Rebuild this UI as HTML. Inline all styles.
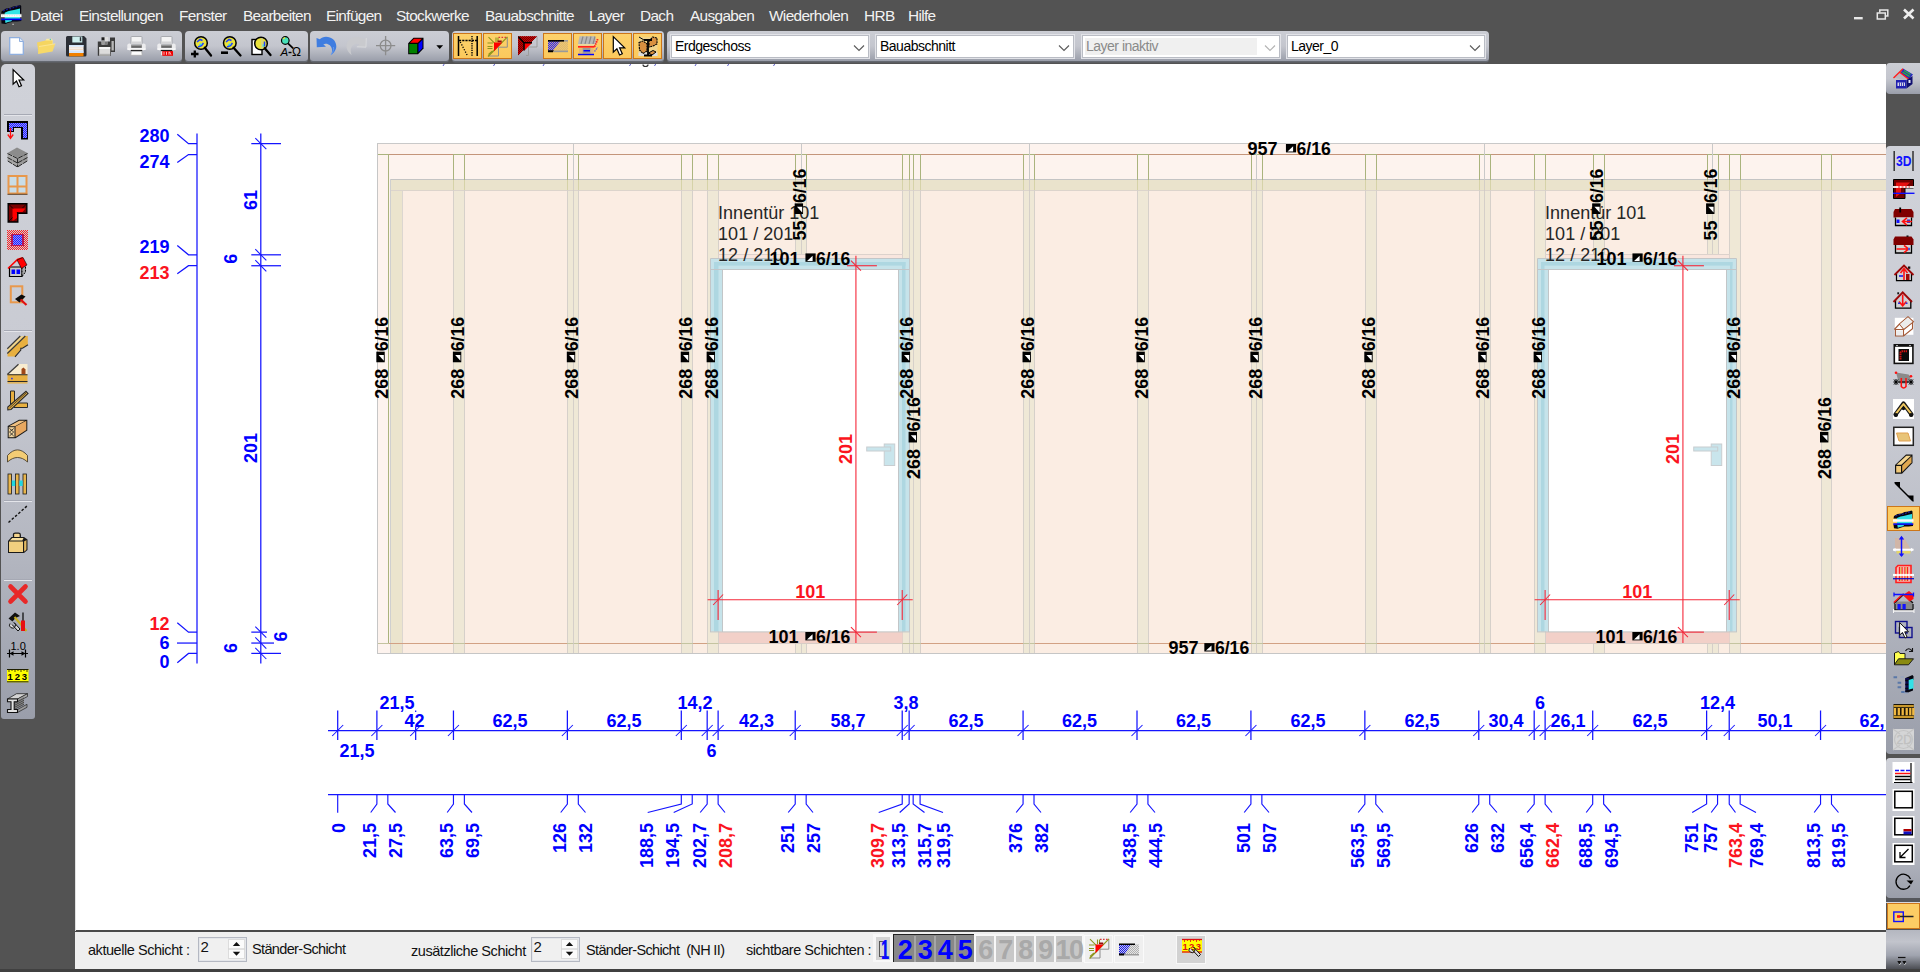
<!DOCTYPE html>
<html><head><meta charset="utf-8"><title>HRB</title>
<style>
html,body{margin:0;padding:0;}
body{width:1920px;height:972px;overflow:hidden;background:#535353;position:relative;font-family:"Liberation Sans",sans-serif;}
.abs{position:absolute;}
#draw{position:absolute;left:0;top:0;width:1920px;height:972px;}
#draw text{font-family:"Liberation Sans",sans-serif;}
#draw .b{font-weight:bold;font-size:18px;}
#draw .t{font-size:18px;fill:#262626;}
.menu span{position:absolute;top:6.5px;font-size:15.4px;color:#f2f2f2;white-space:nowrap;letter-spacing:-0.66px;}
.tb{position:absolute;top:31px;height:30.4px;border-radius:4px 4px 3px 3px;background:linear-gradient(#cbcdd4 0%,#c4c6ce 50%,#b4b7c0 70%,#9a9eaa 100%);box-shadow:0 1.4px 0 #646870;}
.ob{position:absolute;top:33px;height:23.9px;width:26.6px;background:linear-gradient(#fdd26c,#fbc95c);border:1.6px solid #cc7619;}
.cb{position:absolute;top:34.5px;height:23.8px;background:#fff;border:1px solid #b9bcc4;box-sizing:border-box;font-size:14px;line-height:21.5px;padding-left:3px;letter-spacing:-0.5px;color:#000;box-shadow:0 0 0 1px #e2e3e8;}
.cb svg{position:absolute;right:3.5px;top:8.5px;}
.sb{position:absolute;left:75px;top:930px;width:1811px;height:39px;background:#efefef;border-top:2px solid #4a4a4a;box-sizing:border-box;}
.sb>*{margin-top:1px;}
.sb span{position:absolute;font-size:14.5px;letter-spacing:-0.45px;color:#111;white-space:nowrap;}
.ic{position:absolute;}
</style></head><body>
<svg id="draw" viewBox="0 0 1920 972">
<defs><clipPath id="cp"><rect x="75" y="64" width="1811" height="867"/></clipPath></defs>
<rect x="75" y="64" width="1811" height="867" fill="#fff"/>
<g clip-path="url(#cp)" shape-rendering="auto">
<rect x="377.5" y="143.5" width="1513" height="510" fill="#fdf3ee" stroke="#c9c9c9"/>
<rect x="390" y="190" width="1500" height="463.5" fill="#fbede3"/>
<rect x="391" y="190" width="11" height="463.5" fill="#ebe4cd"/><line x1="402.5" y1="190" x2="402.5" y2="653" stroke="#dcd6d0"/>
<rect x="453.5" y="190" width="11" height="463.5" fill="#efe8d6"/>
<rect x="567.5" y="190" width="11" height="463.5" fill="#efe8d6"/>
<rect x="681.5" y="190" width="11" height="463.5" fill="#efe8d6"/>
<rect x="707.5" y="190" width="11" height="463.5" fill="#efe8d6"/>
<rect x="902.5" y="190" width="11" height="463.5" fill="#efe8d6"/>
<rect x="909.5" y="190" width="11" height="463.5" fill="#efe8d6"/>
<rect x="1023.5" y="190" width="11" height="463.5" fill="#efe8d6"/>
<rect x="1137.5" y="190" width="11" height="463.5" fill="#efe8d6"/>
<rect x="1251.5" y="190" width="11" height="463.5" fill="#efe8d6"/>
<rect x="1365.5" y="190" width="11" height="463.5" fill="#efe8d6"/>
<rect x="1479.5" y="190" width="11" height="463.5" fill="#efe8d6"/>
<rect x="1534.5" y="190" width="11" height="463.5" fill="#efe8d6"/>
<rect x="1729.5" y="190" width="11" height="463.5" fill="#efe8d6"/>
<rect x="1821.5" y="190" width="10" height="463.5" fill="#efe8d6"/>
<rect x="795.5" y="190" width="11" height="64.81" fill="#efe8d6"/>
<rect x="795.5" y="643.06" width="11" height="10.44" fill="#efe8d6"/>
<rect x="1593.5" y="190" width="11" height="64.81" fill="#efe8d6"/>
<rect x="1593.5" y="643.06" width="11" height="10.44" fill="#efe8d6"/>
<rect x="1707.5" y="190" width="11" height="64.81" fill="#efe8d6"/>
<rect x="1707.5" y="643.06" width="11" height="10.44" fill="#efe8d6"/>
<rect x="390" y="179.5" width="1500" height="11" fill="#eae3cc"/>
<line x1="390" y1="179.5" x2="1890" y2="179.5" stroke="#c4c4c4"/><line x1="390" y1="190.5" x2="1890" y2="190.5" stroke="#dcd4cc"/><line x1="390.5" y1="179" x2="390.5" y2="653" stroke="#cfcfcf"/>
<line x1="377" y1="154.5" x2="1890" y2="154.5" stroke="#c4957a"/>
<line x1="377" y1="643.5" x2="1890" y2="643.5" stroke="#d2a184"/>
<line x1="453.5" y1="154.55" x2="453.5" y2="180" stroke="#aab37d" stroke-width="1"/>
<line x1="453.5" y1="180" x2="453.5" y2="190" stroke="#d5d2a8" stroke-width="1"/>
<line x1="453.5" y1="190" x2="453.5" y2="653" stroke="#d6d0ca" stroke-width="1"/>
<line x1="464.5" y1="154.55" x2="464.5" y2="180" stroke="#aab37d" stroke-width="1"/>
<line x1="464.5" y1="180" x2="464.5" y2="190" stroke="#d5d2a8" stroke-width="1"/>
<line x1="464.5" y1="190" x2="464.5" y2="653" stroke="#d6d0ca" stroke-width="1"/>
<line x1="453" y1="154.5" x2="465" y2="154.5" stroke="#aab37d"/>
<line x1="453" y1="643.5" x2="465" y2="643.5" stroke="#c4c4a0"/>
<line x1="567.5" y1="154.55" x2="567.5" y2="180" stroke="#aab37d" stroke-width="1"/>
<line x1="567.5" y1="180" x2="567.5" y2="190" stroke="#d5d2a8" stroke-width="1"/>
<line x1="567.5" y1="190" x2="567.5" y2="653" stroke="#d6d0ca" stroke-width="1"/>
<line x1="578.5" y1="154.55" x2="578.5" y2="180" stroke="#aab37d" stroke-width="1"/>
<line x1="578.5" y1="180" x2="578.5" y2="190" stroke="#d5d2a8" stroke-width="1"/>
<line x1="578.5" y1="190" x2="578.5" y2="653" stroke="#d6d0ca" stroke-width="1"/>
<line x1="567" y1="154.5" x2="579" y2="154.5" stroke="#aab37d"/>
<line x1="567" y1="643.5" x2="579" y2="643.5" stroke="#c4c4a0"/>
<line x1="681.5" y1="154.55" x2="681.5" y2="180" stroke="#aab37d" stroke-width="1"/>
<line x1="681.5" y1="180" x2="681.5" y2="190" stroke="#d5d2a8" stroke-width="1"/>
<line x1="681.5" y1="190" x2="681.5" y2="653" stroke="#d6d0ca" stroke-width="1"/>
<line x1="692.5" y1="154.55" x2="692.5" y2="180" stroke="#aab37d" stroke-width="1"/>
<line x1="692.5" y1="180" x2="692.5" y2="190" stroke="#d5d2a8" stroke-width="1"/>
<line x1="692.5" y1="190" x2="692.5" y2="653" stroke="#d6d0ca" stroke-width="1"/>
<line x1="681" y1="154.5" x2="693" y2="154.5" stroke="#aab37d"/>
<line x1="681" y1="643.5" x2="693" y2="643.5" stroke="#c4c4a0"/>
<line x1="707.5" y1="154.55" x2="707.5" y2="180" stroke="#aab37d" stroke-width="1"/>
<line x1="707.5" y1="180" x2="707.5" y2="190" stroke="#d5d2a8" stroke-width="1"/>
<line x1="707.5" y1="190" x2="707.5" y2="653" stroke="#d6d0ca" stroke-width="1"/>
<line x1="718.5" y1="154.55" x2="718.5" y2="180" stroke="#aab37d" stroke-width="1"/>
<line x1="718.5" y1="180" x2="718.5" y2="190" stroke="#d5d2a8" stroke-width="1"/>
<line x1="718.5" y1="190" x2="718.5" y2="653" stroke="#d6d0ca" stroke-width="1"/>
<line x1="707" y1="154.5" x2="719" y2="154.5" stroke="#aab37d"/>
<line x1="707" y1="643.5" x2="719" y2="643.5" stroke="#c4c4a0"/>
<line x1="902.5" y1="154.55" x2="902.5" y2="180" stroke="#aab37d" stroke-width="1"/>
<line x1="902.5" y1="180" x2="902.5" y2="190" stroke="#d5d2a8" stroke-width="1"/>
<line x1="902.5" y1="190" x2="902.5" y2="653" stroke="#d6d0ca" stroke-width="1"/>
<line x1="913.5" y1="154.55" x2="913.5" y2="180" stroke="#aab37d" stroke-width="1"/>
<line x1="913.5" y1="180" x2="913.5" y2="190" stroke="#d5d2a8" stroke-width="1"/>
<line x1="913.5" y1="190" x2="913.5" y2="653" stroke="#d6d0ca" stroke-width="1"/>
<line x1="902" y1="154.5" x2="914" y2="154.5" stroke="#aab37d"/>
<line x1="902" y1="643.5" x2="914" y2="643.5" stroke="#c4c4a0"/>
<line x1="909.5" y1="154.55" x2="909.5" y2="180" stroke="#aab37d" stroke-width="1"/>
<line x1="909.5" y1="180" x2="909.5" y2="190" stroke="#d5d2a8" stroke-width="1"/>
<line x1="909.5" y1="190" x2="909.5" y2="653" stroke="#d6d0ca" stroke-width="1"/>
<line x1="920.5" y1="154.55" x2="920.5" y2="180" stroke="#aab37d" stroke-width="1"/>
<line x1="920.5" y1="180" x2="920.5" y2="190" stroke="#d5d2a8" stroke-width="1"/>
<line x1="920.5" y1="190" x2="920.5" y2="653" stroke="#d6d0ca" stroke-width="1"/>
<line x1="909" y1="154.5" x2="921" y2="154.5" stroke="#aab37d"/>
<line x1="909" y1="643.5" x2="921" y2="643.5" stroke="#c4c4a0"/>
<line x1="1023.5" y1="154.55" x2="1023.5" y2="180" stroke="#aab37d" stroke-width="1"/>
<line x1="1023.5" y1="180" x2="1023.5" y2="190" stroke="#d5d2a8" stroke-width="1"/>
<line x1="1023.5" y1="190" x2="1023.5" y2="653" stroke="#d6d0ca" stroke-width="1"/>
<line x1="1034.5" y1="154.55" x2="1034.5" y2="180" stroke="#aab37d" stroke-width="1"/>
<line x1="1034.5" y1="180" x2="1034.5" y2="190" stroke="#d5d2a8" stroke-width="1"/>
<line x1="1034.5" y1="190" x2="1034.5" y2="653" stroke="#d6d0ca" stroke-width="1"/>
<line x1="1023" y1="154.5" x2="1035" y2="154.5" stroke="#aab37d"/>
<line x1="1023" y1="643.5" x2="1035" y2="643.5" stroke="#c4c4a0"/>
<line x1="1137.5" y1="154.55" x2="1137.5" y2="180" stroke="#aab37d" stroke-width="1"/>
<line x1="1137.5" y1="180" x2="1137.5" y2="190" stroke="#d5d2a8" stroke-width="1"/>
<line x1="1137.5" y1="190" x2="1137.5" y2="653" stroke="#d6d0ca" stroke-width="1"/>
<line x1="1148.5" y1="154.55" x2="1148.5" y2="180" stroke="#aab37d" stroke-width="1"/>
<line x1="1148.5" y1="180" x2="1148.5" y2="190" stroke="#d5d2a8" stroke-width="1"/>
<line x1="1148.5" y1="190" x2="1148.5" y2="653" stroke="#d6d0ca" stroke-width="1"/>
<line x1="1137" y1="154.5" x2="1149" y2="154.5" stroke="#aab37d"/>
<line x1="1137" y1="643.5" x2="1149" y2="643.5" stroke="#c4c4a0"/>
<line x1="1251.5" y1="154.55" x2="1251.5" y2="180" stroke="#aab37d" stroke-width="1"/>
<line x1="1251.5" y1="180" x2="1251.5" y2="190" stroke="#d5d2a8" stroke-width="1"/>
<line x1="1251.5" y1="190" x2="1251.5" y2="653" stroke="#d6d0ca" stroke-width="1"/>
<line x1="1262.5" y1="154.55" x2="1262.5" y2="180" stroke="#aab37d" stroke-width="1"/>
<line x1="1262.5" y1="180" x2="1262.5" y2="190" stroke="#d5d2a8" stroke-width="1"/>
<line x1="1262.5" y1="190" x2="1262.5" y2="653" stroke="#d6d0ca" stroke-width="1"/>
<line x1="1251" y1="154.5" x2="1263" y2="154.5" stroke="#aab37d"/>
<line x1="1251" y1="643.5" x2="1263" y2="643.5" stroke="#c4c4a0"/>
<line x1="1365.5" y1="154.55" x2="1365.5" y2="180" stroke="#aab37d" stroke-width="1"/>
<line x1="1365.5" y1="180" x2="1365.5" y2="190" stroke="#d5d2a8" stroke-width="1"/>
<line x1="1365.5" y1="190" x2="1365.5" y2="653" stroke="#d6d0ca" stroke-width="1"/>
<line x1="1376.5" y1="154.55" x2="1376.5" y2="180" stroke="#aab37d" stroke-width="1"/>
<line x1="1376.5" y1="180" x2="1376.5" y2="190" stroke="#d5d2a8" stroke-width="1"/>
<line x1="1376.5" y1="190" x2="1376.5" y2="653" stroke="#d6d0ca" stroke-width="1"/>
<line x1="1365" y1="154.5" x2="1377" y2="154.5" stroke="#aab37d"/>
<line x1="1365" y1="643.5" x2="1377" y2="643.5" stroke="#c4c4a0"/>
<line x1="1479.5" y1="154.55" x2="1479.5" y2="180" stroke="#aab37d" stroke-width="1"/>
<line x1="1479.5" y1="180" x2="1479.5" y2="190" stroke="#d5d2a8" stroke-width="1"/>
<line x1="1479.5" y1="190" x2="1479.5" y2="653" stroke="#d6d0ca" stroke-width="1"/>
<line x1="1490.5" y1="154.55" x2="1490.5" y2="180" stroke="#aab37d" stroke-width="1"/>
<line x1="1490.5" y1="180" x2="1490.5" y2="190" stroke="#d5d2a8" stroke-width="1"/>
<line x1="1490.5" y1="190" x2="1490.5" y2="653" stroke="#d6d0ca" stroke-width="1"/>
<line x1="1479" y1="154.5" x2="1491" y2="154.5" stroke="#aab37d"/>
<line x1="1479" y1="643.5" x2="1491" y2="643.5" stroke="#c4c4a0"/>
<line x1="1534.5" y1="154.55" x2="1534.5" y2="180" stroke="#aab37d" stroke-width="1"/>
<line x1="1534.5" y1="180" x2="1534.5" y2="190" stroke="#d5d2a8" stroke-width="1"/>
<line x1="1534.5" y1="190" x2="1534.5" y2="653" stroke="#d6d0ca" stroke-width="1"/>
<line x1="1545.5" y1="154.55" x2="1545.5" y2="180" stroke="#aab37d" stroke-width="1"/>
<line x1="1545.5" y1="180" x2="1545.5" y2="190" stroke="#d5d2a8" stroke-width="1"/>
<line x1="1545.5" y1="190" x2="1545.5" y2="653" stroke="#d6d0ca" stroke-width="1"/>
<line x1="1534" y1="154.5" x2="1546" y2="154.5" stroke="#aab37d"/>
<line x1="1534" y1="643.5" x2="1546" y2="643.5" stroke="#c4c4a0"/>
<line x1="1729.5" y1="154.55" x2="1729.5" y2="180" stroke="#aab37d" stroke-width="1"/>
<line x1="1729.5" y1="180" x2="1729.5" y2="190" stroke="#d5d2a8" stroke-width="1"/>
<line x1="1729.5" y1="190" x2="1729.5" y2="653" stroke="#d6d0ca" stroke-width="1"/>
<line x1="1740.5" y1="154.55" x2="1740.5" y2="180" stroke="#aab37d" stroke-width="1"/>
<line x1="1740.5" y1="180" x2="1740.5" y2="190" stroke="#d5d2a8" stroke-width="1"/>
<line x1="1740.5" y1="190" x2="1740.5" y2="653" stroke="#d6d0ca" stroke-width="1"/>
<line x1="1729" y1="154.5" x2="1741" y2="154.5" stroke="#aab37d"/>
<line x1="1729" y1="643.5" x2="1741" y2="643.5" stroke="#c4c4a0"/>
<line x1="1821.5" y1="154.55" x2="1821.5" y2="180" stroke="#aab37d" stroke-width="1"/>
<line x1="1821.5" y1="180" x2="1821.5" y2="190" stroke="#d5d2a8" stroke-width="1"/>
<line x1="1821.5" y1="190" x2="1821.5" y2="653" stroke="#d6d0ca" stroke-width="1"/>
<line x1="1831.5" y1="154.55" x2="1831.5" y2="180" stroke="#aab37d" stroke-width="1"/>
<line x1="1831.5" y1="180" x2="1831.5" y2="190" stroke="#d5d2a8" stroke-width="1"/>
<line x1="1831.5" y1="190" x2="1831.5" y2="653" stroke="#d6d0ca" stroke-width="1"/>
<line x1="1821" y1="154.5" x2="1832" y2="154.5" stroke="#aab37d"/>
<line x1="1821" y1="643.5" x2="1832" y2="643.5" stroke="#c4c4a0"/>
<line x1="388.5" y1="154.55" x2="388.5" y2="180" stroke="#aab37d" stroke-width="1"/>
<line x1="388.5" y1="180" x2="388.5" y2="643.06" stroke="#aab37d" stroke-width="1"/>
<line x1="377" y1="154.5" x2="389" y2="154.5" stroke="#aab37d"/>
<line x1="377" y1="643.5" x2="389" y2="643.5" stroke="#c4c4a0"/>
<line x1="795.5" y1="154.55" x2="795.5" y2="180" stroke="#aab37d" stroke-width="1"/>
<line x1="795.5" y1="180" x2="795.5" y2="190" stroke="#d5d2a8" stroke-width="1"/>
<line x1="795.5" y1="190" x2="795.5" y2="254.81" stroke="#d6d0ca" stroke-width="1"/>
<line x1="795.5" y1="643.06" x2="795.5" y2="653" stroke="#d6d0ca" stroke-width="1"/>
<line x1="806.5" y1="154.55" x2="806.5" y2="180" stroke="#aab37d" stroke-width="1"/>
<line x1="806.5" y1="180" x2="806.5" y2="190" stroke="#d5d2a8" stroke-width="1"/>
<line x1="806.5" y1="190" x2="806.5" y2="254.81" stroke="#d6d0ca" stroke-width="1"/>
<line x1="806.5" y1="643.06" x2="806.5" y2="653" stroke="#d6d0ca" stroke-width="1"/>
<line x1="795" y1="154.5" x2="807" y2="154.5" stroke="#aab37d"/>
<line x1="1593.5" y1="154.55" x2="1593.5" y2="180" stroke="#aab37d" stroke-width="1"/>
<line x1="1593.5" y1="180" x2="1593.5" y2="190" stroke="#d5d2a8" stroke-width="1"/>
<line x1="1593.5" y1="190" x2="1593.5" y2="254.81" stroke="#d6d0ca" stroke-width="1"/>
<line x1="1593.5" y1="643.06" x2="1593.5" y2="653" stroke="#d6d0ca" stroke-width="1"/>
<line x1="1604.5" y1="154.55" x2="1604.5" y2="180" stroke="#aab37d" stroke-width="1"/>
<line x1="1604.5" y1="180" x2="1604.5" y2="190" stroke="#d5d2a8" stroke-width="1"/>
<line x1="1604.5" y1="190" x2="1604.5" y2="254.81" stroke="#d6d0ca" stroke-width="1"/>
<line x1="1604.5" y1="643.06" x2="1604.5" y2="653" stroke="#d6d0ca" stroke-width="1"/>
<line x1="1593" y1="154.5" x2="1605" y2="154.5" stroke="#aab37d"/>
<line x1="1707.5" y1="154.55" x2="1707.5" y2="180" stroke="#aab37d" stroke-width="1"/>
<line x1="1707.5" y1="180" x2="1707.5" y2="190" stroke="#d5d2a8" stroke-width="1"/>
<line x1="1707.5" y1="190" x2="1707.5" y2="254.81" stroke="#d6d0ca" stroke-width="1"/>
<line x1="1707.5" y1="643.06" x2="1707.5" y2="653" stroke="#d6d0ca" stroke-width="1"/>
<line x1="1718.5" y1="154.55" x2="1718.5" y2="180" stroke="#aab37d" stroke-width="1"/>
<line x1="1718.5" y1="180" x2="1718.5" y2="190" stroke="#d5d2a8" stroke-width="1"/>
<line x1="1718.5" y1="190" x2="1718.5" y2="254.81" stroke="#d6d0ca" stroke-width="1"/>
<line x1="1718.5" y1="643.06" x2="1718.5" y2="653" stroke="#d6d0ca" stroke-width="1"/>
<line x1="1707" y1="154.5" x2="1719" y2="154.5" stroke="#aab37d"/>
<line x1="573.5" y1="144" x2="573.5" y2="179" stroke="#c9c9c9"/>
<line x1="573.5" y1="179" x2="573.5" y2="653" stroke="#cfcac6" opacity="0.8"/>
<line x1="801.5" y1="144" x2="801.5" y2="179" stroke="#c9c9c9"/>
<line x1="801.5" y1="179" x2="801.5" y2="653" stroke="#cfcac6" opacity="0.8"/>
<line x1="1029.5" y1="144" x2="1029.5" y2="179" stroke="#c9c9c9"/>
<line x1="1029.5" y1="179" x2="1029.5" y2="653" stroke="#cfcac6" opacity="0.8"/>
<line x1="1256.5" y1="144" x2="1256.5" y2="179" stroke="#c9c9c9"/>
<line x1="1256.5" y1="179" x2="1256.5" y2="653" stroke="#cfcac6" opacity="0.8"/>
<line x1="1484.5" y1="144" x2="1484.5" y2="179" stroke="#c9c9c9"/>
<line x1="1484.5" y1="179" x2="1484.5" y2="653" stroke="#cfcac6" opacity="0.8"/>
<line x1="1712.5" y1="144" x2="1712.5" y2="179" stroke="#c9c9c9"/>
<line x1="1712.5" y1="179" x2="1712.5" y2="653" stroke="#cfcac6" opacity="0.8"/>
<rect x="718.5" y="254.5" width="184" height="4" fill="#f9e6de"/>
<path d="M718.5 254.5H902.5M718.5 254.5V258M902.5 254.5V258" stroke="#dcd2cc" fill="none"/>
<rect x="719" y="632" width="183.5" height="11" fill="#f2d0c8"/>
<path d="M718.5 643.5H902.5" stroke="#d8ccc6"/>
<rect x="723" y="270" width="175" height="361.5" fill="#fff"/>
<rect x="711" y="270" width="11" height="361.5" fill="#c6e3ea"/>
<rect x="714" y="270" width="4.5" height="361.5" fill="#aed7e1"/>
<rect x="899" y="270" width="10" height="361.5" fill="#c6e3ea"/>
<rect x="902" y="270" width="3.5" height="361.5" fill="#aed7e1"/>
<rect x="711" y="259" width="198" height="10.5" fill="#c6e3ea"/>
<rect x="714" y="262" width="191.5" height="3.6" fill="#aed7e1"/>
<rect x="714" y="262" width="4.5" height="7.5" fill="#aed7e1"/><rect x="902" y="262" width="3.5" height="7.5" fill="#aed7e1"/>
<path d="M710.5 258.5H909.5V632M710.5 258.5V632M710.5 269.5H909.5M722.5 269.5V632M898.5 269.5V632M710 631.9H910" stroke="#c2c6c8" fill="none"/>
<rect x="884.22" y="444" width="10.5" height="21.5" fill="#c9e5ec" stroke="#c8cdd0"/>
<rect x="866.72" y="447" width="24" height="4" fill="#c9e5ec" stroke="#c8cdd0"/>
<g stroke="#f5283a" fill="none" stroke-width="1.1">
<line x1="855.92" y1="255.74" x2="855.92" y2="643.06"/>
<line x1="846.92" y1="265.74" x2="876.92" y2="265.74"/><line x1="850.92" y1="260.74" x2="860.92" y2="270.74" stroke-width="1.05"/>
<line x1="846.92" y1="632.13" x2="876.92" y2="632.13"/><line x1="850.92" y1="627.13" x2="860.92" y2="637.13" stroke-width="1.05"/>
<line x1="707.62" y1="599.7" x2="912.72" y2="599.7"/>
<line x1="718.12" y1="590" x2="718.12" y2="620"/><line x1="713.12" y1="605" x2="723.12" y2="594.5" stroke-width="1.05"/>
<line x1="902.22" y1="590" x2="902.22" y2="620"/><line x1="897.22" y1="605" x2="907.22" y2="594.5" stroke-width="1.05"/>
</g>
<text x="810.17" y="597.5" fill="#fb1420" class="b" text-anchor="middle">101</text>
<text transform="translate(852.42,449) rotate(-90)" fill="#fb1420" class="b" text-anchor="middle">201</text>
<text x="718.12" y="218.5" class="t">Innentür 101</text><text x="718.12" y="239.5" class="t">101 / 201</text><text x="718.12" y="260.5" class="t">12 / 210</text>
<rect x="1545.5" y="254.5" width="184" height="4" fill="#f9e6de"/>
<path d="M1545.5 254.5H1729.5M1545.5 254.5V258M1729.5 254.5V258" stroke="#dcd2cc" fill="none"/>
<rect x="1546" y="632" width="183.5" height="11" fill="#f2d0c8"/>
<path d="M1545.5 643.5H1729.5" stroke="#d8ccc6"/>
<rect x="1549" y="270" width="177" height="361.5" fill="#fff"/>
<rect x="1538" y="270" width="10" height="361.5" fill="#c6e3ea"/>
<rect x="1541" y="270" width="3.5" height="361.5" fill="#aed7e1"/>
<rect x="1727" y="270" width="9" height="361.5" fill="#c6e3ea"/>
<rect x="1730" y="270" width="2.5" height="361.5" fill="#aed7e1"/>
<rect x="1538" y="259" width="198" height="10.5" fill="#c6e3ea"/>
<rect x="1541" y="262" width="191.5" height="3.6" fill="#aed7e1"/>
<rect x="1541" y="262" width="3.5" height="7.5" fill="#aed7e1"/><rect x="1730" y="262" width="2.5" height="7.5" fill="#aed7e1"/>
<path d="M1537.5 258.5H1736.5V632M1537.5 258.5V632M1537.5 269.5H1736.5M1548.5 269.5V632M1726.5 269.5V632M1537 631.9H1737" stroke="#c2c6c8" fill="none"/>
<rect x="1711.23" y="444" width="10.5" height="21.5" fill="#c9e5ec" stroke="#c8cdd0"/>
<rect x="1693.73" y="447" width="24" height="4" fill="#c9e5ec" stroke="#c8cdd0"/>
<g stroke="#f5283a" fill="none" stroke-width="1.1">
<line x1="1682.92" y1="255.74" x2="1682.92" y2="643.06"/>
<line x1="1673.92" y1="265.74" x2="1703.92" y2="265.74"/><line x1="1677.92" y1="260.74" x2="1687.92" y2="270.74" stroke-width="1.05"/>
<line x1="1673.92" y1="632.13" x2="1703.92" y2="632.13"/><line x1="1677.92" y1="627.13" x2="1687.92" y2="637.13" stroke-width="1.05"/>
<line x1="1534.62" y1="599.7" x2="1739.73" y2="599.7"/>
<line x1="1545.12" y1="590" x2="1545.12" y2="620"/><line x1="1540.12" y1="605" x2="1550.12" y2="594.5" stroke-width="1.05"/>
<line x1="1729.23" y1="590" x2="1729.23" y2="620"/><line x1="1724.23" y1="605" x2="1734.23" y2="594.5" stroke-width="1.05"/>
</g>
<text x="1637.17" y="597.5" fill="#fb1420" class="b" text-anchor="middle">101</text>
<text transform="translate(1679.42,449) rotate(-90)" fill="#fb1420" class="b" text-anchor="middle">201</text>
<text x="1545.12" y="218.5" class="t">Innentür 101</text><text x="1545.12" y="239.5" class="t">101 / 201</text><text x="1545.12" y="260.5" class="t">12 / 210</text>
<path d="M377.5 653.5H1890M377.5 143.5V653.5" stroke="#c6c6c6" fill="none"/>
<g transform="translate(387.53,398.8) rotate(-90)"><text class="b" x="0" y="0">268</text><path d="M36.53 -11.2h10.6v8.4h-10.6z" fill="#000"/><path d="M38.13 -3.7l5.6 -5.2v5.2z" fill="#fff"/><text class="b" x="47.53" y="0" textLength="34.3" lengthAdjust="spacingAndGlyphs">6/16</text></g>
<g transform="translate(464.08,398.8) rotate(-90)"><text class="b" x="0" y="0">268</text><path d="M36.53 -11.2h10.6v8.4h-10.6z" fill="#000"/><path d="M38.13 -3.7l5.6 -5.2v5.2z" fill="#fff"/><text class="b" x="47.53" y="0" textLength="34.3" lengthAdjust="spacingAndGlyphs">6/16</text></g>
<g transform="translate(578.01,398.8) rotate(-90)"><text class="b" x="0" y="0">268</text><path d="M36.53 -11.2h10.6v8.4h-10.6z" fill="#000"/><path d="M38.13 -3.7l5.6 -5.2v5.2z" fill="#fff"/><text class="b" x="47.53" y="0" textLength="34.3" lengthAdjust="spacingAndGlyphs">6/16</text></g>
<g transform="translate(691.93,398.8) rotate(-90)"><text class="b" x="0" y="0">268</text><path d="M36.53 -11.2h10.6v8.4h-10.6z" fill="#000"/><path d="M38.13 -3.7l5.6 -5.2v5.2z" fill="#fff"/><text class="b" x="47.53" y="0" textLength="34.3" lengthAdjust="spacingAndGlyphs">6/16</text></g>
<g transform="translate(717.82,398.8) rotate(-90)"><text class="b" x="0" y="0">268</text><path d="M36.53 -11.2h10.6v8.4h-10.6z" fill="#000"/><path d="M38.13 -3.7l5.6 -5.2v5.2z" fill="#fff"/><text class="b" x="47.53" y="0" textLength="34.3" lengthAdjust="spacingAndGlyphs">6/16</text></g>
<g transform="translate(912.86,398.8) rotate(-90)"><text class="b" x="0" y="0">268</text><path d="M36.53 -11.2h10.6v8.4h-10.6z" fill="#000"/><path d="M38.13 -3.7l5.6 -5.2v5.2z" fill="#fff"/><text class="b" x="47.53" y="0" textLength="34.3" lengthAdjust="spacingAndGlyphs">6/16</text></g>
<g transform="translate(1033.71,398.8) rotate(-90)"><text class="b" x="0" y="0">268</text><path d="M36.53 -11.2h10.6v8.4h-10.6z" fill="#000"/><path d="M38.13 -3.7l5.6 -5.2v5.2z" fill="#fff"/><text class="b" x="47.53" y="0" textLength="34.3" lengthAdjust="spacingAndGlyphs">6/16</text></g>
<g transform="translate(1147.63,398.8) rotate(-90)"><text class="b" x="0" y="0">268</text><path d="M36.53 -11.2h10.6v8.4h-10.6z" fill="#000"/><path d="M38.13 -3.7l5.6 -5.2v5.2z" fill="#fff"/><text class="b" x="47.53" y="0" textLength="34.3" lengthAdjust="spacingAndGlyphs">6/16</text></g>
<g transform="translate(1261.56,398.8) rotate(-90)"><text class="b" x="0" y="0">268</text><path d="M36.53 -11.2h10.6v8.4h-10.6z" fill="#000"/><path d="M38.13 -3.7l5.6 -5.2v5.2z" fill="#fff"/><text class="b" x="47.53" y="0" textLength="34.3" lengthAdjust="spacingAndGlyphs">6/16</text></g>
<g transform="translate(1375.48,398.8) rotate(-90)"><text class="b" x="0" y="0">268</text><path d="M36.53 -11.2h10.6v8.4h-10.6z" fill="#000"/><path d="M38.13 -3.7l5.6 -5.2v5.2z" fill="#fff"/><text class="b" x="47.53" y="0" textLength="34.3" lengthAdjust="spacingAndGlyphs">6/16</text></g>
<g transform="translate(1489.41,398.8) rotate(-90)"><text class="b" x="0" y="0">268</text><path d="M36.53 -11.2h10.6v8.4h-10.6z" fill="#000"/><path d="M38.13 -3.7l5.6 -5.2v5.2z" fill="#fff"/><text class="b" x="47.53" y="0" textLength="34.3" lengthAdjust="spacingAndGlyphs">6/16</text></g>
<g transform="translate(1544.82,398.8) rotate(-90)"><text class="b" x="0" y="0">268</text><path d="M36.53 -11.2h10.6v8.4h-10.6z" fill="#000"/><path d="M38.13 -3.7l5.6 -5.2v5.2z" fill="#fff"/><text class="b" x="47.53" y="0" textLength="34.3" lengthAdjust="spacingAndGlyphs">6/16</text></g>
<g transform="translate(1739.86,398.8) rotate(-90)"><text class="b" x="0" y="0">268</text><path d="M36.53 -11.2h10.6v8.4h-10.6z" fill="#000"/><path d="M38.13 -3.7l5.6 -5.2v5.2z" fill="#fff"/><text class="b" x="47.53" y="0" textLength="34.3" lengthAdjust="spacingAndGlyphs">6/16</text></g>
<g transform="translate(919.78,479) rotate(-90)"><text class="b" x="0" y="0">268</text><path d="M36.53 -11.2h10.6v8.4h-10.6z" fill="#000"/><path d="M38.13 -3.7l5.6 -5.2v5.2z" fill="#fff"/><text class="b" x="47.53" y="0" textLength="34.3" lengthAdjust="spacingAndGlyphs">6/16</text></g>
<g transform="translate(1831.18,479) rotate(-90)"><text class="b" x="0" y="0">268</text><path d="M36.53 -11.2h10.6v8.4h-10.6z" fill="#000"/><path d="M38.13 -3.7l5.6 -5.2v5.2z" fill="#fff"/><text class="b" x="47.53" y="0" textLength="34.3" lengthAdjust="spacingAndGlyphs">6/16</text></g>
<g transform="translate(805.86,240.5) rotate(-90)"><text class="b" x="0" y="0">55</text><path d="M26.52 -11.2h10.6v8.4h-10.6z" fill="#000"/><path d="M28.12 -3.7l5.6 -5.2v5.2z" fill="#fff"/><text class="b" x="37.52" y="0" textLength="34.3" lengthAdjust="spacingAndGlyphs">6/16</text></g>
<g transform="translate(1603.33,240.5) rotate(-90)"><text class="b" x="0" y="0">55</text><path d="M26.52 -11.2h10.6v8.4h-10.6z" fill="#000"/><path d="M28.12 -3.7l5.6 -5.2v5.2z" fill="#fff"/><text class="b" x="37.52" y="0" textLength="34.3" lengthAdjust="spacingAndGlyphs">6/16</text></g>
<g transform="translate(1717.26,240.5) rotate(-90)"><text class="b" x="0" y="0">55</text><path d="M26.52 -11.2h10.6v8.4h-10.6z" fill="#000"/><path d="M28.12 -3.7l5.6 -5.2v5.2z" fill="#fff"/><text class="b" x="37.52" y="0" textLength="34.3" lengthAdjust="spacingAndGlyphs">6/16</text></g>
<g transform="translate(1247.4,155.2) rotate(0)"><text class="b" x="0" y="0">957</text><path d="M38.53 -11.2h10.2v8.4h-10.2z" fill="#000"/><path d="M40.13 -3.7l5.6 -5.2v5.2z" fill="#fff"/><text class="b" x="49.13" y="0" textLength="34.3" lengthAdjust="spacingAndGlyphs">6/16</text></g>
<g transform="translate(1168.6,654.3) rotate(0)"><text class="b" x="0" y="0">957</text><path d="M35.73 -11.2h10.2v8.4h-10.2z" fill="#000"/><path d="M37.33 -3.7l5.6 -5.2v5.2z" fill="#fff"/><text class="b" x="46.33" y="0" textLength="34.3" lengthAdjust="spacingAndGlyphs">6/16</text></g>
<g transform="translate(769.42,264.6) rotate(0)"><text class="b" x="0" y="0">101</text><path d="M36.03 -11.2h10.2v8.4h-10.2z" fill="#000"/><path d="M37.63 -3.7l5.6 -5.2v5.2z" fill="#fff"/><text class="b" x="46.63" y="0" textLength="34.3" lengthAdjust="spacingAndGlyphs">6/16</text></g>
<g transform="translate(768.42,643.2) rotate(0)"><text class="b" x="0" y="0">101</text><path d="M36.93 -11.2h10.2v8.4h-10.2z" fill="#000"/><path d="M38.53 -3.7l5.6 -5.2v5.2z" fill="#fff"/><text class="b" x="47.53" y="0" textLength="34.3" lengthAdjust="spacingAndGlyphs">6/16</text></g>
<g transform="translate(1596.42,264.6) rotate(0)"><text class="b" x="0" y="0">101</text><path d="M36.03 -11.2h10.2v8.4h-10.2z" fill="#000"/><path d="M37.63 -3.7l5.6 -5.2v5.2z" fill="#fff"/><text class="b" x="46.63" y="0" textLength="34.3" lengthAdjust="spacingAndGlyphs">6/16</text></g>
<g transform="translate(1595.42,643.2) rotate(0)"><text class="b" x="0" y="0">101</text><path d="M36.93 -11.2h10.2v8.4h-10.2z" fill="#000"/><path d="M38.53 -3.7l5.6 -5.2v5.2z" fill="#fff"/><text class="b" x="47.53" y="0" textLength="34.3" lengthAdjust="spacingAndGlyphs">6/16</text></g>
<g stroke="#1414ff" fill="none" stroke-width="1.25">
<line x1="197" y1="133.5" x2="197" y2="663.5"/><line x1="260.8" y1="133.5" x2="260.8" y2="663.5"/>
<path d="M197 143.62H188.5L177.3 134.32"/>
<path d="M197 154.55H188.5L177.3 162.55"/>
<path d="M197 254.81H188.5L177.3 245.51"/>
<path d="M197 265.74H188.5L177.3 273.74"/>
<path d="M197 632.13H188.5L177.3 622.83"/>
<path d="M197 643.06H177"/>
<path d="M197 653.4H188.5L177.3 662.7"/>
<line x1="251.3" y1="143.62" x2="281" y2="143.62"/><line x1="255.3" y1="138.02" x2="266.3" y2="149.22" stroke-width="1.05"/>
<line x1="251.3" y1="254.81" x2="281" y2="254.81"/><line x1="255.3" y1="249.21" x2="266.3" y2="260.41" stroke-width="1.05"/>
<line x1="251.3" y1="265.74" x2="281" y2="265.74"/><line x1="255.3" y1="260.14" x2="266.3" y2="271.34" stroke-width="1.05"/>
<line x1="251.3" y1="632.13" x2="267" y2="632.13"/><line x1="255.3" y1="626.53" x2="266.3" y2="637.73" stroke-width="1.05"/>
<line x1="251.3" y1="643.06" x2="274" y2="643.06"/><line x1="255.3" y1="637.46" x2="266.3" y2="648.66" stroke-width="1.05"/>
<line x1="251.3" y1="653.4" x2="281" y2="653.4"/><line x1="255.3" y1="647.8" x2="266.3" y2="659" stroke-width="1.05"/>
</g>
<text x="169.5" y="142" fill="#0000ff" class="b" text-anchor="end">280</text>
<text x="169.5" y="168" fill="#0000ff" class="b" text-anchor="end">274</text>
<text x="169.5" y="253" fill="#0000ff" class="b" text-anchor="end">219</text>
<text x="169.5" y="279" fill="#fb1420" class="b" text-anchor="end">213</text>
<text x="169.5" y="629.8" fill="#fb1420" class="b" text-anchor="end">12</text>
<text x="169.5" y="649" fill="#0000ff" class="b" text-anchor="end">6</text>
<text x="169.5" y="668.3" fill="#0000ff" class="b" text-anchor="end">0</text>
<text transform="translate(257.3,200) rotate(-90)" fill="#0000ff" class="b" text-anchor="middle">61</text>
<text transform="translate(237,258.8) rotate(-90)" fill="#0000ff" class="b" text-anchor="middle">6</text>
<text transform="translate(257.3,448) rotate(-90)" fill="#0000ff" class="b" text-anchor="middle">201</text>
<text transform="translate(237,648) rotate(-90)" fill="#0000ff" class="b" text-anchor="middle">6</text>
<text transform="translate(286.5,636.5) rotate(-90)" fill="#0000ff" class="b" text-anchor="middle">6</text>
<g stroke="#1414ff" fill="none" stroke-width="1.25">
<line x1="328" y1="730.6" x2="1890" y2="730.6"/><line x1="328" y1="794.7" x2="1890" y2="794.7"/>
<line x1="337.7" y1="710.5" x2="337.7" y2="740"/><line x1="332.2" y1="736" x2="343.2" y2="725" stroke-width="1.05"/>
<line x1="376.89" y1="710.5" x2="376.89" y2="740"/><line x1="371.39" y1="736" x2="382.39" y2="725" stroke-width="1.05"/>
<line x1="453.45" y1="710.5" x2="453.45" y2="740"/><line x1="447.95" y1="736" x2="458.95" y2="725" stroke-width="1.05"/>
<line x1="567.37" y1="710.5" x2="567.37" y2="740"/><line x1="561.87" y1="736" x2="572.87" y2="725" stroke-width="1.05"/>
<line x1="681.3" y1="710.5" x2="681.3" y2="740"/><line x1="675.8" y1="736" x2="686.8" y2="725" stroke-width="1.05"/>
<line x1="707.18" y1="710.5" x2="707.18" y2="740"/><line x1="701.68" y1="736" x2="712.68" y2="725" stroke-width="1.05"/>
<line x1="718.12" y1="710.5" x2="718.12" y2="740"/><line x1="712.62" y1="736" x2="723.62" y2="725" stroke-width="1.05"/>
<line x1="795.22" y1="710.5" x2="795.22" y2="740"/><line x1="789.72" y1="736" x2="800.72" y2="725" stroke-width="1.05"/>
<line x1="902.22" y1="710.5" x2="902.22" y2="740"/><line x1="896.72" y1="736" x2="907.72" y2="725" stroke-width="1.05"/>
<line x1="909.15" y1="710.5" x2="909.15" y2="740"/><line x1="903.65" y1="736" x2="914.65" y2="725" stroke-width="1.05"/>
<line x1="1023.07" y1="710.5" x2="1023.07" y2="740"/><line x1="1017.57" y1="736" x2="1028.57" y2="725" stroke-width="1.05"/>
<line x1="1137" y1="710.5" x2="1137" y2="740"/><line x1="1131.5" y1="736" x2="1142.5" y2="725" stroke-width="1.05"/>
<line x1="1250.92" y1="710.5" x2="1250.92" y2="740"/><line x1="1245.42" y1="736" x2="1256.42" y2="725" stroke-width="1.05"/>
<line x1="1364.85" y1="710.5" x2="1364.85" y2="740"/><line x1="1359.35" y1="736" x2="1370.35" y2="725" stroke-width="1.05"/>
<line x1="1478.77" y1="710.5" x2="1478.77" y2="740"/><line x1="1473.27" y1="736" x2="1484.27" y2="725" stroke-width="1.05"/>
<line x1="1534.19" y1="710.5" x2="1534.19" y2="740"/><line x1="1528.69" y1="736" x2="1539.69" y2="725" stroke-width="1.05"/>
<line x1="1545.12" y1="710.5" x2="1545.12" y2="740"/><line x1="1539.62" y1="736" x2="1550.62" y2="725" stroke-width="1.05"/>
<line x1="1592.7" y1="710.5" x2="1592.7" y2="740"/><line x1="1587.2" y1="736" x2="1598.2" y2="725" stroke-width="1.05"/>
<line x1="1706.62" y1="710.5" x2="1706.62" y2="740"/><line x1="1701.12" y1="736" x2="1712.12" y2="725" stroke-width="1.05"/>
<line x1="1729.23" y1="710.5" x2="1729.23" y2="740"/><line x1="1723.73" y1="736" x2="1734.73" y2="725" stroke-width="1.05"/>
<line x1="1820.55" y1="710.5" x2="1820.55" y2="740"/><line x1="1815.05" y1="736" x2="1826.05" y2="725" stroke-width="1.05"/>
<line x1="415.67" y1="727" x2="415.67" y2="740"/><line x1="410.17" y1="736" x2="421.17" y2="725" stroke-width="1.05"/>
<line x1="415.67" y1="710.5" x2="415.67" y2="712"/>
</g>
<text x="414.5" y="727" fill="#0000ff" class="b" text-anchor="middle">42</text>
<text x="510" y="727" fill="#0000ff" class="b" text-anchor="middle">62,5</text>
<text x="624" y="727" fill="#0000ff" class="b" text-anchor="middle">62,5</text>
<text x="756.5" y="727" fill="#0000ff" class="b" text-anchor="middle">42,3</text>
<text x="848" y="727" fill="#0000ff" class="b" text-anchor="middle">58,7</text>
<text x="966" y="727" fill="#0000ff" class="b" text-anchor="middle">62,5</text>
<text x="1079.5" y="727" fill="#0000ff" class="b" text-anchor="middle">62,5</text>
<text x="1193.5" y="727" fill="#0000ff" class="b" text-anchor="middle">62,5</text>
<text x="1308" y="727" fill="#0000ff" class="b" text-anchor="middle">62,5</text>
<text x="1422" y="727" fill="#0000ff" class="b" text-anchor="middle">62,5</text>
<text x="1506" y="727" fill="#0000ff" class="b" text-anchor="middle">30,4</text>
<text x="1568" y="727" fill="#0000ff" class="b" text-anchor="middle">26,1</text>
<text x="1650" y="727" fill="#0000ff" class="b" text-anchor="middle">62,5</text>
<text x="1775" y="727" fill="#0000ff" class="b" text-anchor="middle">50,1</text>
<text x="397" y="708.5" fill="#0000ff" class="b" text-anchor="middle">21,5</text>
<text x="695" y="708.5" fill="#0000ff" class="b" text-anchor="middle">14,2</text>
<text x="906" y="708.5" fill="#0000ff" class="b" text-anchor="middle">3,8</text>
<text x="1540" y="708.5" fill="#0000ff" class="b" text-anchor="middle">6</text>
<text x="1717.5" y="708.5" fill="#0000ff" class="b" text-anchor="middle">12,4</text>
<text x="357" y="757" fill="#0000ff" class="b" text-anchor="middle">21,5</text>
<text x="711.5" y="757" fill="#0000ff" class="b" text-anchor="middle">6</text>
<text x="1859.5" y="727" fill="#0000ff" class="b">62,</text>
<g stroke="#1414ff" fill="none" stroke-width="1.15">
<path d="M337.7 794.7V812.7"/>
<path d="M376.89 794.7V804L370.7 812.5"/>
<path d="M387.83 794.7V804L395.5 812.5"/>
<path d="M453.45 794.7V804L447.2 812.5"/>
<path d="M464.38 794.7V804L472 812.5"/>
<path d="M567.37 794.7V804L560.7 812.5"/>
<path d="M578.31 794.7V804L585.5 812.5"/>
<path d="M681.3 794.7V804L647.7 812.5"/>
<path d="M692.23 794.7V804L673.7 812.5"/>
<path d="M707.18 794.7V804L700.2 812.5"/>
<path d="M718.12 794.7V804L725 812.5"/>
<path d="M795.22 794.7V804L788.2 812.5"/>
<path d="M806.16 794.7V804L813 812.5"/>
<path d="M902.22 794.7V804L878.7 812.5"/>
<path d="M909.15 794.7V804L899.7 812.5"/>
<path d="M913.16 794.7V804L924.5 812.5"/>
<path d="M920.08 794.7V804L943 812.5"/>
<path d="M1023.07 794.7V804L1016.2 812.5"/>
<path d="M1034.01 794.7V804L1041 812.5"/>
<path d="M1137 794.7V804L1130.2 812.5"/>
<path d="M1147.93 794.7V804L1155 812.5"/>
<path d="M1250.92 794.7V804L1244.2 812.5"/>
<path d="M1261.86 794.7V804L1269 812.5"/>
<path d="M1364.85 794.7V804L1358.2 812.5"/>
<path d="M1375.78 794.7V804L1383 812.5"/>
<path d="M1478.77 794.7V804L1472.2 812.5"/>
<path d="M1489.71 794.7V804L1497 812.5"/>
<path d="M1534.19 794.7V804L1527.2 812.5"/>
<path d="M1545.12 794.7V804L1552 812.5"/>
<path d="M1592.7 794.7V804L1586.2 812.5"/>
<path d="M1603.63 794.7V804L1611 812.5"/>
<path d="M1706.62 794.7V804L1692.2 812.5"/>
<path d="M1717.56 794.7V804L1711.2 812.5"/>
<path d="M1729.23 794.7V804L1735.5 812.5"/>
<path d="M1740.16 794.7V804L1756 812.5"/>
<path d="M1820.55 794.7V804L1814.2 812.5"/>
<path d="M1831.48 794.7V804L1838.5 812.5"/>
</g>
<text transform="translate(344.5,823) rotate(-90)" fill="#0000ff" class="b" text-anchor="end">0</text>
<text transform="translate(376,823) rotate(-90)" fill="#0000ff" class="b" text-anchor="end">21,5</text>
<text transform="translate(402,823) rotate(-90)" fill="#0000ff" class="b" text-anchor="end">27,5</text>
<text transform="translate(452.5,823) rotate(-90)" fill="#0000ff" class="b" text-anchor="end">63,5</text>
<text transform="translate(478.5,823) rotate(-90)" fill="#0000ff" class="b" text-anchor="end">69,5</text>
<text transform="translate(566,823) rotate(-90)" fill="#0000ff" class="b" text-anchor="end">126</text>
<text transform="translate(592,823) rotate(-90)" fill="#0000ff" class="b" text-anchor="end">132</text>
<text transform="translate(653,823) rotate(-90)" fill="#0000ff" class="b" text-anchor="end">188,5</text>
<text transform="translate(679,823) rotate(-90)" fill="#0000ff" class="b" text-anchor="end">194,5</text>
<text transform="translate(705.5,823) rotate(-90)" fill="#0000ff" class="b" text-anchor="end">202,7</text>
<text transform="translate(731.5,823) rotate(-90)" fill="#fb1420" class="b" text-anchor="end">208,7</text>
<text transform="translate(793.5,823) rotate(-90)" fill="#0000ff" class="b" text-anchor="end">251</text>
<text transform="translate(819.5,823) rotate(-90)" fill="#0000ff" class="b" text-anchor="end">257</text>
<text transform="translate(884,823) rotate(-90)" fill="#fb1420" class="b" text-anchor="end">309,7</text>
<text transform="translate(905,823) rotate(-90)" fill="#0000ff" class="b" text-anchor="end">313,5</text>
<text transform="translate(931,823) rotate(-90)" fill="#0000ff" class="b" text-anchor="end">315,7</text>
<text transform="translate(949.5,823) rotate(-90)" fill="#0000ff" class="b" text-anchor="end">319,5</text>
<text transform="translate(1021.5,823) rotate(-90)" fill="#0000ff" class="b" text-anchor="end">376</text>
<text transform="translate(1047.5,823) rotate(-90)" fill="#0000ff" class="b" text-anchor="end">382</text>
<text transform="translate(1135.5,823) rotate(-90)" fill="#0000ff" class="b" text-anchor="end">438,5</text>
<text transform="translate(1161.5,823) rotate(-90)" fill="#0000ff" class="b" text-anchor="end">444,5</text>
<text transform="translate(1249.5,823) rotate(-90)" fill="#0000ff" class="b" text-anchor="end">501</text>
<text transform="translate(1275.5,823) rotate(-90)" fill="#0000ff" class="b" text-anchor="end">507</text>
<text transform="translate(1363.5,823) rotate(-90)" fill="#0000ff" class="b" text-anchor="end">563,5</text>
<text transform="translate(1389.5,823) rotate(-90)" fill="#0000ff" class="b" text-anchor="end">569,5</text>
<text transform="translate(1477.5,823) rotate(-90)" fill="#0000ff" class="b" text-anchor="end">626</text>
<text transform="translate(1503.5,823) rotate(-90)" fill="#0000ff" class="b" text-anchor="end">632</text>
<text transform="translate(1532.5,823) rotate(-90)" fill="#0000ff" class="b" text-anchor="end">656,4</text>
<text transform="translate(1558.5,823) rotate(-90)" fill="#fb1420" class="b" text-anchor="end">662,4</text>
<text transform="translate(1591.5,823) rotate(-90)" fill="#0000ff" class="b" text-anchor="end">688,5</text>
<text transform="translate(1617.5,823) rotate(-90)" fill="#0000ff" class="b" text-anchor="end">694,5</text>
<text transform="translate(1697.5,823) rotate(-90)" fill="#0000ff" class="b" text-anchor="end">751</text>
<text transform="translate(1716.5,823) rotate(-90)" fill="#0000ff" class="b" text-anchor="end">757</text>
<text transform="translate(1742,823) rotate(-90)" fill="#fb1420" class="b" text-anchor="end">763,4</text>
<text transform="translate(1762.5,823) rotate(-90)" fill="#0000ff" class="b" text-anchor="end">769,4</text>
<text transform="translate(1819.5,823) rotate(-90)" fill="#0000ff" class="b" text-anchor="end">813,5</text>
<text transform="translate(1845,823) rotate(-90)" fill="#0000ff" class="b" text-anchor="end">819,5</text>
<path d="M443 66l1.2 -2" stroke="#3a3ac0" stroke-width="1" opacity="0.8"/>
<path d="M493.5 66l1.2 -2" stroke="#3a3ac0" stroke-width="1" opacity="0.8"/>
<path d="M543 66l1.2 -2" stroke="#3a3ac0" stroke-width="1" opacity="0.8"/>
<path d="M629.5 66l1.2 -2" stroke="#3a3ac0" stroke-width="1" opacity="0.8"/>
<path d="M654.5 66l1.2 -2" stroke="#3a3ac0" stroke-width="1" opacity="0.8"/>
<path d="M695 66l1.2 -2" stroke="#3a3ac0" stroke-width="1" opacity="0.8"/>
<path d="M727.5 66l1.2 -2" stroke="#3a3ac0" stroke-width="1" opacity="0.8"/>
<path d="M773.5 66l1.2 -2" stroke="#3a3ac0" stroke-width="1" opacity="0.8"/>
<path d="M643 64.5a2.5 2 0 0 0 5 0" stroke="#333" stroke-width="1.2" fill="none"/>
</g>
</svg>
<div class="menu abs" style="left:0;top:0;width:1920px;height:31px">
<span style="left:30px">Datei</span>
<span style="left:79px">Einstellungen</span>
<span style="left:179px">Fenster</span>
<span style="left:243px">Bearbeiten</span>
<span style="left:326px">Einfügen</span>
<span style="left:396px">Stockwerke</span>
<span style="left:485px">Bauabschnitte</span>
<span style="left:589px">Layer</span>
<span style="left:640px">Dach</span>
<span style="left:690px">Ausgaben</span>
<span style="left:769px">Wiederholen</span>
<span style="left:864px">HRB</span>
<span style="left:908px">Hilfe</span>
</div>
<div class="tb" style="left:1px;width:181px"></div>
<div class="tb" style="left:185px;width:123px"></div>
<div class="tb" style="left:310px;width:139px"></div>
<div class="tb" style="left:452px;width:212px"></div>
<div class="tb" style="left:667px;width:822px"></div>
<div class="ob" style="left:453px"></div>
<div class="ob" style="left:483px"></div>
<div class="ob" style="left:543px"></div>
<div class="ob" style="left:573px"></div>
<div class="ob" style="left:603px"></div>
<div class="ob" style="left:633px"></div>
<div class="cb" style="left:671px;width:198px;background:#fff;color:#000;"><span style="position:relative">Erdgeschoss</span><svg width="12" height="8" viewBox="0 0 12 8"><path d="M1 1.5L6 6.5L11 1.5" fill="none" stroke="#5c5c5c" stroke-width="1.15"/></svg></div>
<div class="cb" style="left:876px;width:198px;background:#fff;color:#000;"><span style="position:relative">Bauabschnitt</span><svg width="12" height="8" viewBox="0 0 12 8"><path d="M1 1.5L6 6.5L11 1.5" fill="none" stroke="#5c5c5c" stroke-width="1.15"/></svg></div>
<div class="cb" style="left:1082px;width:198px;background:#fff;color:#8a8a8a;"><span style="position:absolute;left:2px;top:2px;right:22px;bottom:2px;background:#f0f0f0"></span><span style="position:relative">Layer inaktiv</span><svg width="12" height="8" viewBox="0 0 12 8"><path d="M1 1.5L6 6.5L11 1.5" fill="none" stroke="#b4b4b4" stroke-width="1.15"/></svg></div>
<div class="cb" style="left:1287px;width:198px;background:#fff;color:#000;"><span style="position:relative">Layer_0</span><svg width="12" height="8" viewBox="0 0 12 8"><path d="M1 1.5L6 6.5L11 1.5" fill="none" stroke="#5c5c5c" stroke-width="1.15"/></svg></div>
<div class="abs" style="left:1px;top:64px;width:34px;height:655px;border-radius:5px 5px 3px 3px;background:linear-gradient(#d0d2d9 0%,#c9cbd3 45%,#b3b6c0 75%,#9a9eaa 100%)"></div>
<div class="abs" style="left:4px;top:114px;width:28px;height:1px;background:#a6a9b4"></div><div class="abs" style="left:4px;top:115px;width:28px;height:1px;background:#e4e5ea"></div>
<div class="abs" style="left:4px;top:330px;width:28px;height:1px;background:#a6a9b4"></div><div class="abs" style="left:4px;top:331px;width:28px;height:1px;background:#e4e5ea"></div>
<div class="abs" style="left:4px;top:500px;width:28px;height:1px;background:#a6a9b4"></div><div class="abs" style="left:4px;top:501px;width:28px;height:1px;background:#e4e5ea"></div>
<div class="abs" style="left:4px;top:579px;width:28px;height:1px;background:#a6a9b4"></div><div class="abs" style="left:4px;top:580px;width:28px;height:1px;background:#e4e5ea"></div>
<div class="abs" style="left:1886px;top:63px;width:34px;height:31px;border-radius:4px 0 0 4px;background:linear-gradient(#cbcdd4 0%,#c4c6ce 50%,#b4b7c0 70%,#9a9eaa 100%)"></div>
<div class="abs" style="left:1886px;top:146px;width:34px;height:608px;border-radius:4px 0 0 4px;background:linear-gradient(#d0d2d9 0%,#c9cbd3 45%,#b3b6c0 75%,#9a9eaa 100%)"></div>
<div class="abs" style="left:1886px;top:758px;width:34px;height:139.5px;border-radius:4px 0 0 4px;background:linear-gradient(#d0d2d9 0%,#c4c6ce 45%,#aeb1bb 75%,#9a9eaa 100%)"></div>
<div class="abs" style="left:1886px;top:897.5px;width:34px;height:5px;background:#55575c"></div><div class="abs" style="left:1886px;top:902px;width:34px;height:1px;background:#d8d9de"></div>
<div class="abs" style="left:1886px;top:930px;width:34px;height:39px;background:linear-gradient(#b4b7c0 0%,#c2c4cc 30%,#a0a4af 65%,#4c4e54 100%)"></div>
<div class="abs" style="left:1887px;top:506px;width:31px;height:22.800px;background:#fccd64;border:1.600px solid #cc7619"></div>
<div class="abs" style="left:1887px;top:903px;width:31px;height:23.800px;background:#fccd64;border:1.600px solid #cc7619"></div>
<div class="sb">
<span style="left:13px;top:9px">aktuelle Schicht :</span>
<span style="left:177px;top:8px;letter-spacing:-0.65px">Ständer-Schicht</span>
<span style="left:336px;top:10px">zusätzliche Schicht</span>
<span style="left:511px;top:9px;letter-spacing:-0.65px">Ständer-Schicht&nbsp;&nbsp;(NH II)</span>
<span style="left:671px;top:9px">sichtbare Schichten :</span>
<div class="abs" style="left:123px;top:4px;width:47px;height:22.500px;background:#f0f0f0;border:1px solid #b4b8c2;box-shadow:inset 0 0 0 1px #e4e6ea"><span style="left:1.500px;top:-0.500px;font-size:15px">2</span><svg class="abs" style="left:29px;top:0.500px" width="17" height="20" viewBox="0 0 17 20"><rect x="0.500" y="0.500" width="16" height="19" fill="#fbfbfb" stroke="#dcdcdc"/><path d="M0.500 10H16.500" stroke="#c8c8c8"/><path d="M4.800 7L8.500 3L12.200 7z" fill="#111"/><path d="M4.800 12.800L8.500 16.800L12.200 12.800z" fill="#111"/></svg></div>
<div class="abs" style="left:456px;top:4px;width:47px;height:22.500px;background:#f0f0f0;border:1px solid #b4b8c2;box-shadow:inset 0 0 0 1px #e4e6ea"><span style="left:1.500px;top:-0.500px;font-size:15px">2</span><svg class="abs" style="left:29px;top:0.500px" width="17" height="20" viewBox="0 0 17 20"><rect x="0.500" y="0.500" width="16" height="19" fill="#fbfbfb" stroke="#dcdcdc"/><path d="M0.500 10H16.500" stroke="#c8c8c8"/><path d="M4.800 7L8.500 3L12.200 7z" fill="#111"/><path d="M4.800 12.800L8.500 16.800L12.200 12.800z" fill="#111"/></svg></div>
</div>
<div class="abs" style="left:873px;top:934px;width:211px;height:28px;background:#f7f7f7"></div>
<div class="abs" style="left:876px;top:937px;width:14px;height:23px;background:#d3d3d3"></div>
<div class="abs" style="left:879px;top:941px;width:4px;height:14px;border:1px solid #555"></div>
<div class="abs" style="left:893px;top:934px;width:81px;height:27.500px;background:#888;border-top:1.500px solid #222;border-left:1.500px solid #222;box-sizing:border-box"></div>
<div class="abs" style="left:914px;top:936px;width:1.500px;height:25.500px;background:#a6a6a6"></div>
<div class="abs" style="left:934px;top:936px;width:1.500px;height:25.500px;background:#a6a6a6"></div>
<div class="abs" style="left:954px;top:936px;width:1.500px;height:25.500px;background:#a6a6a6"></div>
<div class="abs" style="left:976px;top:936px;width:18px;height:25.500px;background:#c8c8c8"></div>
<div class="abs" style="left:996px;top:936px;width:18px;height:25.500px;background:#c8c8c8"></div>
<div class="abs" style="left:1016px;top:936px;width:18px;height:25.500px;background:#c8c8c8"></div>
<div class="abs" style="left:1036px;top:936px;width:18px;height:25.500px;background:#c8c8c8"></div>
<div class="abs" style="left:1056px;top:936px;width:26px;height:25.500px;background:#c8c8c8"></div>
<span class="abs" style="left:877.5px;top:935.5px;width:13px;text-align:center;font-size:27px;font-weight:bold;color:#0a0aff;letter-spacing:-1.500px;line-height:28px;transform:scaleX(0.55);">1</span>
<span class="abs" style="left:894.5px;top:935.5px;width:20px;text-align:center;font-size:27px;font-weight:bold;color:#0000ff;letter-spacing:-1.500px;line-height:28px;">2</span>
<span class="abs" style="left:914.5px;top:935.5px;width:20px;text-align:center;font-size:27px;font-weight:bold;color:#0000ff;letter-spacing:-1.500px;line-height:28px;">3</span>
<span class="abs" style="left:934.5px;top:935.5px;width:20px;text-align:center;font-size:27px;font-weight:bold;color:#0000ff;letter-spacing:-1.500px;line-height:28px;">4</span>
<span class="abs" style="left:954.5px;top:935.5px;width:20px;text-align:center;font-size:27px;font-weight:bold;color:#0000ff;letter-spacing:-1.500px;line-height:28px;">5</span>
<span class="abs" style="left:975px;top:935.5px;width:20px;text-align:center;font-size:27px;font-weight:bold;color:#a9a9a9;letter-spacing:-1.500px;line-height:28px;">6</span>
<span class="abs" style="left:995px;top:935.5px;width:20px;text-align:center;font-size:27px;font-weight:bold;color:#a9a9a9;letter-spacing:-1.500px;line-height:28px;">7</span>
<span class="abs" style="left:1015px;top:935.5px;width:20px;text-align:center;font-size:27px;font-weight:bold;color:#a9a9a9;letter-spacing:-1.500px;line-height:28px;">8</span>
<span class="abs" style="left:1035px;top:935.5px;width:20px;text-align:center;font-size:27px;font-weight:bold;color:#a9a9a9;letter-spacing:-1.500px;line-height:28px;">9</span>
<span class="abs" style="left:1055px;top:935.5px;width:28px;text-align:center;font-size:27px;font-weight:bold;color:#a9a9a9;letter-spacing:-1.500px;line-height:28px;">10</span>
<div class="abs" style="left:0;top:969px;width:1920px;height:3px;background:#404040"></div>
<div class="abs" style="left:75px;top:64px;width:1px;height:867px;background:#e0e0e0"></div>
<div class="abs" style="left:1084px;top:935px;width:27px;height:26px;border:1px solid #fafafa"></div><div class="abs" style="left:1114px;top:935px;width:28px;height:26px;border:1px solid #fafafa"></div><div class="abs" style="left:1176px;top:934.500px;width:28px;height:27px;background:#d2d2d2;border:1px solid #f8f8f8"></div>
<svg class="abs" style="left:0;top:0;pointer-events:none" width="1920" height="972" viewBox="0 0 1920 972"><defs><pattern id="hx" width="2" height="2" patternUnits="userSpaceOnUse"><rect width="1" height="1" fill="#700000"/><rect x="1" y="1" width="1" height="1" fill="#700000"/></pattern><pattern id="dots" width="2" height="2" patternUnits="userSpaceOnUse"><rect width="1" height="1" fill="#fccd64" opacity="0.75"/><rect x="1" y="1" width="1" height="1" fill="#fccd64" opacity="0.75"/></pattern><pattern id="bdots" width="2" height="2" patternUnits="userSpaceOnUse"><rect width="2" height="2" fill="#2020ff"/><rect width="1" height="1" fill="#9090ff"/><rect x="1" y="1" width="1" height="1" fill="#9090ff"/></pattern><pattern id="dots2" width="2" height="2" patternUnits="userSpaceOnUse"><rect width="1" height="1" fill="#f6f6f6" opacity="0.75"/><rect x="1" y="1" width="1" height="1" fill="#f6f6f6" opacity="0.75"/></pattern><pattern id="rdots" width="2" height="2" patternUnits="userSpaceOnUse"><rect width="1" height="1" fill="#ff2020"/><rect x="1" y="1" width="1" height="1" fill="#ff2020"/></pattern></defs><g transform="translate(0,0)"><path d="M1.500 11.500L6 8.500L10 8L13 6.500L16.500 6L20.200 5L21.200 6V13.500H1.200z" fill="#05050f"/><path d="M3 11L7 9.300L11 8.500L14.500 7.200L19.500 6" stroke="#1a1a90" stroke-width="1.300" stroke-dasharray="2 1.300" fill="none"/><path d="M4.700 12.700L8 11.300L11 10.500L14 10L17 9.200L20 8.500V19.500H4.700z" fill="#33e6e6"/><path d="M1.300 19.800H21.300V21L17 21.600H12.500L12 22L8.500 22.800L5.500 24L1.500 23.500z" fill="#05050f"/><path d="M5 20H12L11.500 21.300L8 22L5.500 23z" fill="#33e6e6"/><rect x="1" y="14.300" width="20.500" height="2.800" fill="#fbfbfb"/><path d="M2 15.700h19" stroke="#d8d8d8" stroke-width="0.800" stroke-dasharray="1 1.400"/><rect x="1.200" y="18.500" width="20.300" height="1.700" fill="#0000f0"/><rect x="12.200" y="23.800" width="1.800" height="0.900" fill="#c8c8c8"/></g><g transform="translate(1850,6)"><rect x="4" y="11" width="8.7" height="2.4" fill="#e8e8e8"/><rect x="27.3" y="7" width="8" height="6" fill="none" stroke="#e8e8e8" stroke-width="1.5"/><path d="M29.800 6.500V4h8v6h-2.200" fill="none" stroke="#e8e8e8" stroke-width="1.500"/><path d="M54 3.500l9.500 9M63.500 3.500l-9.500 9" stroke="#eee" stroke-width="2.600"/></g><g transform="translate(9,37)"><path d="M0.7 0.7H10.5L14.3 4.5V17.3H0.7z" fill="#fff" stroke="#8fafdf" stroke-width="1.3"/><path d="M10.5 0.7V4.5H14.3" fill="#dfe9f8" stroke="#8fafdf" stroke-width="1"/></g><g transform="translate(36.5,38)"><path d="M9 2.5L10 0.8H15.5L16.2 2.5V7H9z" fill="#f8e9a0"/><path d="M0.5 4.5L9 2.5H16V8L2 15z" fill="#f5d560"/><path d="M2.5 8.5L18.8 5.8L16 13.5L1.5 16z" fill="#f7d968"/><path d="M2.5 8.5L18.8 5.8" stroke="#fbe9a0" stroke-width="0.8"/><circle cx="13.9" cy="1.5" r="0.8" fill="#5bc0c8"/></g><g transform="translate(66,36)"><path d="M1.5 0H18L20.5 2.5V19a1.5 1.5 0 0 1-1.5 1.5H1.5A1.500 1.500 0 0 1 0 19V1.5A1.500 1.500 0 0 1 1.5 0z" fill="#2b2e35"/><rect x="6.3" y="0.5" width="10" height="6" fill="#cdeeed"/><rect x="13.8" y="1.2" width="1.4" height="4" fill="#2b2e35"/><rect x="3" y="9" width="14.5" height="8" fill="#f4f4f8"/><rect x="3" y="9" width="14.5" height="1.6" fill="#d5e6fb"/><rect x="3" y="11.6" width="14.5" height="0.6" fill="#f2cfae"/><rect x="3" y="13.4" width="14.5" height="0.6" fill="#f2cfae"/><rect x="3" y="14.5" width="14.5" height="2.5" fill="#d5e6fb"/><rect x="3" y="17" width="14.5" height="3.3" fill="#f08000"/></g><g transform="translate(97.5,37)"><path d="M12.500 0.500H17.500V15H12.500z" fill="#3a3a3a"/><rect x="14" y="4" width="2.300" height="9.500" fill="#b8b8b8"/><rect x="4" y="0.300" width="3.200" height="3.200" fill="#1e1e1e"/><rect x="7.200" y="0" width="3.600" height="4.500" fill="#dedede"/><path d="M0.300 4.500H4V7.500H10V4.500H13.500V18.800H0.300z" fill="#3c3c3c"/><rect x="4.200" y="3.500" width="3" height="4.500" fill="#9c9c9c"/><rect x="7.200" y="4.500" width="2.800" height="3.200" fill="#7a7a7a"/><rect x="1.700" y="10" width="11" height="8.500" fill="#dcdcdc"/><rect x="1.700" y="10" width="11" height="2" fill="#f6f6f6"/><rect x="1.700" y="16.800" width="11" height="1.700" fill="#b0b0b0"/></g><g transform="translate(127,36)"><rect x="0.300" y="7.600" width="18.400" height="6.600" rx="2" fill="#ececee"/><rect x="4" y="0.500" width="11" height="8" rx="0.800" fill="#f4f4f4" stroke="#a2a4a9" stroke-width="0.900"/><rect x="4.500" y="5.500" width="10" height="2.800" fill="#d4d4d6"/><rect x="4.200" y="9.200" width="10.600" height="2.700" fill="#6a6a6a"/><rect x="4.200" y="9.200" width="10.600" height="0.800" fill="#9a9a9a"/><rect x="0.300" y="12.500" width="18.400" height="1.300" fill="#fbfbfb"/><rect x="3.800" y="13.900" width="11.400" height="1.400" fill="#141414"/><path d="M4.300 15.300H14.700L15.200 19.300H3.800z" fill="#fdfdfd" stroke="#a8a8a8" stroke-width="0.700"/></g><g transform="translate(157,36)"><rect x="0.300" y="7.600" width="18.400" height="6.600" rx="2" fill="#ececee"/><rect x="4" y="0.500" width="11" height="8" rx="0.800" fill="#f4f4f4" stroke="#a2a4a9" stroke-width="0.900"/><rect x="4.500" y="5.500" width="10" height="2.800" fill="#d4d4d6"/><rect x="4.200" y="9.200" width="10.600" height="2.700" fill="#6a6a6a"/><rect x="4.200" y="9.200" width="10.600" height="0.800" fill="#9a9a9a"/><rect x="0.300" y="12.500" width="18.400" height="1.300" fill="#fbfbfb"/><rect x="3.800" y="13.900" width="11.400" height="1.400" fill="#141414"/><rect x="4" y="15.300" width="2" height="3.800" fill="#e8e8e8"/><rect x="5.300" y="15.100" width="10.700" height="4.700" fill="#f00000"/><path d="M7 18.800v-3M9.500 18.800v-3M12 18.800v-3M14 18.800l-1.500 -3" stroke="#fff" stroke-width="0.700"/></g><g transform="translate(0,0)"><circle cx="201" cy="43" r="6.3" fill="#e9e23c" stroke="#000" stroke-width="1.5"/><path d="M197 42l3 -2.5l2.5 1M198 47l3.5 -1.5l2 -2.5" stroke="#2040ff" stroke-width="1.6" fill="none"/><path d="M199.5 45l2 -1" stroke="#20e0ff" stroke-width="1.4"/><path d="M204.78 47.725L211 55.5" stroke="#000" stroke-width="2.3" stroke-linecap="round"/><path d="M191 54h7.5M194.8 50.5v7" stroke="#000" stroke-width="2.3"/></g><g transform="translate(0,0)"><circle cx="229.8" cy="43" r="6.3" fill="#e9e23c" stroke="#000" stroke-width="1.5"/><path d="M226 42l3 -2.5l2.5 1M227 47l3.5 -1.5l2 -2.5" stroke="#2040ff" stroke-width="1.6" fill="none"/><path d="M228.5 45l2 -1" stroke="#20e0ff" stroke-width="1.4"/><path d="M233.58 47.725L240.5 55.5" stroke="#000" stroke-width="2.3" stroke-linecap="round"/><path d="M221 52.7h7" stroke="#000" stroke-width="2.6"/></g><g transform="translate(0,0)"><rect x="252" y="39.5" width="10" height="15" fill="#fff" stroke="#000" stroke-width="1.4"/><circle cx="261" cy="43.5" r="6.3" fill="#e9e23c" stroke="#000" stroke-width="1.5"/><path d="M264.5 41.5v5" stroke="#2040ff" stroke-width="1.6"/><path d="M263 44v3" stroke="#20e0ff" stroke-width="1.2"/><path d="M262 38v11" stroke="#c8c8b0" stroke-width="1"/><path d="M264.78 48.225L270.5 55" stroke="#000" stroke-width="2.3" stroke-linecap="round"/></g><g transform="translate(0,0)"><circle cx="285.3" cy="40.5" r="3.8" fill="#48e0b8" stroke="#000" stroke-width="1.2"/><path d="M283 39l2 -1.5" stroke="#e8e040" stroke-width="1.5"/><path d="M288 43.3L293.2 48.3" stroke="#000" stroke-width="1.8"/><text x="280.5" y="56" font-size="11.5" font-family="Liberation Sans" font-style="italic" fill="#000">A</text><path d="M288.5 52.5h3" stroke="#000" stroke-width="1.4"/><text x="292" y="56" font-size="12" font-family="Liberation Sans" fill="#000">Ω</text></g><g transform="translate(316,36)"><path d="M0.5 2L0.8 11.2L10 10.8L7.3 8.2C11 6.5 15.5 9 16 13.5C16.2 15.5 15.8 17.5 15 19C18 17 20.5 13.5 20.3 10C20 4.5 15.5 0.8 10 0.8C7.5 0.8 5.4 1.8 3.8 3.2z" fill="#3f7de0"/><path d="M15 19C17 16 18 13.5 17.5 11" stroke="#6fa0f0" stroke-width="0.8" fill="none"/></g><g transform="translate(346.5,36)"><path d="M19.8 2L19.5 11.2L10.3 10.8L13 8.2C9.3 6.5 4.8 9 4.3 13.5C4.1 15.5 4.5 17.5 5.3 19C2.3 17 -0.2 13.5 0 10C0.3 4.500 4.8 0.8 10.3 0.8C12.8 0.8 14.9 1.8 16.5 3.2z" fill="#c9cace"/><path d="M19.800 2L19.500 11.200L10.300 10.800" fill="none" stroke="#dcdde0" stroke-width="0.800"/></g><g transform="translate(0,0)"><circle cx="385.6" cy="45.6" r="5.4" fill="none" stroke="#8c8c8c" stroke-width="1.3"/><path d="M376 45.6h19.200M385.6 36v19.200" stroke="#8c8c8c" stroke-width="1.3"/></g><g transform="translate(407.5,37)"><path d="M0.7 6.200L6 0.7H16V11.500L10.500 17.300H0.7z" fill="#000"/><path d="M1.700 7h8v9.300h-8z" fill="#008000"/><path d="M2.500 5.800L6.500 1.700H14.300L10.300 5.800z" fill="#ff0000"/><path d="M11 6.800L15 2.700V11L11 15.300z" fill="#0000ff"/></g><g transform="translate(0,0)"><path d="M436.300 45.300h6.800l-3.400 3.700z" fill="#000"/></g><g transform="translate(0,0)"><path d="M458.500 36v20M477.200 36v20" stroke="#000" stroke-width="1.5"/><path d="M472 36v20" stroke="#000" stroke-width="1.400" stroke-dasharray="1.3 1"/><path d="M459 40.500h18" stroke="#000" stroke-width="1.300" stroke-dasharray="2.200 1"/><path d="M460.300 42L467.600 56" stroke="#000" stroke-width="1.300" stroke-dasharray="1.200 1.500"/></g><g transform="translate(0,0)"><path d="M507.3 37.5V47.2H498.5V56.0H488.5" fill="none" stroke="#8e8e8e" stroke-width="1"/><path d="M488 56.5L507.5 36.8" stroke="#8c961c" stroke-width="1.2"/><path d="M487.5 43.0H493M487.5 46.5H492.5M487.5 48.5H492.5M488.5 37.2L494.8 43.3M496 37.5V42.2M498 37.5V41.5M488.5 54.5L492.5 51.0" stroke="#8c961c" stroke-width="1.1" fill="none"/><path d="M494 42.5H502.3L494 51.3z" fill="#ff0000"/><rect x="497.5" y="40.5" width="4.2" height="1.8" fill="#901010"/><path d="M498.5 37.3H506.5" stroke="#d83838" stroke-width="1.2" stroke-dasharray="1.6 1.4"/></g><g transform="translate(0,0)"><path d="M526 55.500H528.500V47H537V36.500" fill="none" stroke="#9c9c9c" stroke-width="1"/><path d="M518 36.200H537L518 55.500z" fill="#c80000"/><path d="M518 36.200H537L528 45.500L518 55.500z" fill="url(#hx)"/><path d="M524.300 43H532L524.300 50.800z" fill="#ff0000"/><path d="M518.500 36.700L524 42.700V50.500M524 42.700H532" fill="none" stroke="#000" stroke-width="1.400"/></g><g transform="translate(0,0)"><rect x="548" y="41" width="20" height="9.500" fill="#d8b878"/><path d="M548 41H560.500L553 50.500H548z" fill="#2424ff"/><rect x="548" y="41" width="20" height="9.500" fill="url(#dots)"/><rect x="548" y="40" width="16" height="1.600" fill="#000"/><rect x="564" y="40" width="4" height="1.600" fill="#9a9a9a"/><path d="M548 50.300h6l-1 2h-5z" fill="#000"/><rect x="553.500" y="50.500" width="14.500" height="1.700" fill="#9a9a9a"/></g><g transform="translate(0,0)"><path d="M579.500 36.300H595L596.500 44H578z" fill="#b8b8b8"/><path d="M581 44l2 -7.500M585 44l2 -7.500M589 44l2 -7.500M593 44l2 -7.500" stroke="#8a8a8a" stroke-width="1.200"/><rect x="578" y="44" width="17" height="1.800" fill="#ecd9a0"/><path d="M578 46.800H594.500" stroke="#ff2020" stroke-width="1.700"/><path d="M594.500 46.800L597.800 39" stroke="#ff2020" stroke-width="1.800" stroke-dasharray="1.500 0.800"/><rect x="579" y="48.300" width="3" height="5" fill="#e0b878"/><rect x="590.500" y="48.300" width="3" height="5" fill="#e0b878"/><rect x="582.500" y="48" width="8" height="5.500" fill="#9a9a9a"/><path d="M583.500 50.700H590M578 54.500H594" stroke="#0000ff" stroke-width="1.500"/><path d="M594.500 51.500l3 -4" stroke="#6060d0" stroke-width="1.300" stroke-dasharray="1.500 0.800"/></g><g transform="translate(612.7,36)"><path d="M0.600 0.600V16.200L4.200 12.800L6.900 19L9.600 17.800L6.900 11.800H12z" fill="#fff" stroke="#000" stroke-width="1.200" stroke-linejoin="miter"/></g><g transform="translate(638,36)"><rect x="0.500" y="1" width="19" height="19" fill="#f0d48c"/><path d="M0.500 16.500h19v3.500h-19z" fill="#dcdcdc"/><path d="M1 6.500L5 5L9 8V15L5 17.500L1.500 14z" fill="#d89040" stroke="#000" stroke-width="1.100" stroke-dasharray="2 0.700"/><path d="M11 5.500L14.500 1L19 2V8L15 10L11 11z" fill="#d89040" stroke="#000" stroke-width="1.100" stroke-dasharray="2 0.700"/><path d="M10.500 17L15 14.500L18 16L14 19z" fill="#d89040" stroke="#000" stroke-width="1"/><path d="M10 4V19.500M6 4h8M6 19.500h8" stroke="#000" stroke-width="1.800"/><path d="M1 1l5 3" stroke="#000" stroke-width="1"/></g><g transform="translate(12.5,69)"><path d="M0.600 0.600V15.200L4 12L6.500 17.800L9 16.700L6.500 11H11.200z" fill="#fff" stroke="#000" stroke-width="1.200"/></g><g transform="translate(7,121)"><path d="M0 0H21V18.500H14V7H7V11H0z" fill="#000"/><path d="M1.500 1.500H19.500V17H15.500V5.500H5.500V9.500H1.500z" fill="url(#bdots)" shape-rendering="crispEdges"/><path d="M3.500 7V17M0.800 13.500L3.500 17.300L6.200 13.500" fill="none" stroke="#ff1010" stroke-width="1.300"/></g><g transform="translate(7,147)"><path d="M10 0.500L20.500 6L10.500 11L0.500 6z" fill="#8c8c8c"/><path d="M0.500 6L10.500 11V20L0.500 14z" fill="#a6a6a6"/><path d="M10.500 11L20.500 6V14L10.500 20z" fill="#9a9a9a"/><path d="M0.500 6.500L10.500 11.500L20.500 6.500M10.500 11.500V20M0.500 10.500L10.500 16L20.500 10.500M0.800 14L10.500 20L20.200 14" fill="none" stroke="#1a1a1a" stroke-width="0.900" stroke-dasharray="5 1"/></g><g transform="translate(7.5,175)"><rect x="1" y="1" width="18" height="17.500" fill="#c9dde8" stroke="#e8984c" stroke-width="2"/><path d="M10 1V18.500M1 11.500H19" stroke="#e8984c" stroke-width="2"/><path d="M0 19.300H20" stroke="#3a2a1a" stroke-width="0.800"/></g><g transform="translate(7.5,203)"><path d="M0.700 0.700H19.300V10.300H10.300V19H0.700z" fill="#7a0000" stroke="#000" stroke-width="1.400"/><path d="M5 5.500H18L15 9H9.500V15L5 18z" fill="#ff0000"/><path d="M0.700 0.700L5.500 5.500M19.300 0.700L15 5M0.700 19L5 14.500M10.300 10.300L9.500 9" stroke="#000" stroke-width="0.800"/></g><g transform="translate(7,230)"><g shape-rendering="crispEdges"><rect x="0" y="0" width="21" height="20" fill="url(#rdots)"/><rect x="4" y="4" width="13" height="12" fill="#a01060"/><rect x="4" y="4" width="13" height="12" fill="url(#rdots)" opacity="0.500"/><rect x="6" y="5" width="9" height="10" fill="url(#bdots)"/></g></g><g transform="translate(7.5,257)"><path d="M2 10H14.500V19.500H2z" fill="#c8c8c8" stroke="#000" stroke-width="1.200"/><path d="M14.500 10L18 6V15L14.500 19.500z" fill="#a8a8a8" stroke="#000" stroke-width="1" stroke-dasharray="2 1"/><path d="M0.500 11.500L10 2.500L15 0.800" fill="none" stroke="#ff0000" stroke-width="1.600"/><path d="M9.500 3L15.500 0.500L19.500 8L14 11.500z" fill="#ff0000" stroke="#000" stroke-width="0.600"/><rect x="4" y="12.500" width="3.600" height="4.500" fill="#0000ff"/><rect x="9" y="12.500" width="3.600" height="4.500" fill="#0000ff"/></g><g transform="translate(9.5,285)"><rect x="1.300" y="1.300" width="11.500" height="16" fill="none" stroke="#e8984c" stroke-width="2"/><path d="M5.500 14L12 9.500L16 11.500L10 17.500z" fill="#0a0a0a"/><path d="M11 14.500L17 20" stroke="#e01010" stroke-width="2.200"/></g><g transform="translate(0,0)"><path d="M25 336H27.8V344.500L22.500 348L20.500 348.300V350L15 356.500H7.500V353.500z" fill="#e8b040"/><path d="M7.500 349L20.500 336.200L25 336L7.500 353.500z" fill="#f1d488"/><path d="M7.300 348.800L20.300 336M7.300 353.500L25.300 336" stroke="#3a3a3a" stroke-width="1.200"/><path d="M15 356.800L20.800 350V348.300H22.500L28 344.700" fill="none" stroke="#2a2a2a" stroke-width="1.100"/></g><g transform="translate(0,0)"><path d="M7.500 374.500L19 364H27.500V374.500z" fill="#f8ecd0"/><path d="M21.500 374V369L23.500 367.500L25.500 369.500V374z" fill="#a04818"/><path d="M7.300 374.500L18.500 364.300" stroke="#3a3a3a" stroke-width="1.200"/><rect x="7.500" y="374.500" width="20" height="7" fill="#e8b040"/><path d="M7.500 374.800H27.500M7.500 381.500H27.500" stroke="#2a2a2a" stroke-width="1.100"/><rect x="7.500" y="382.200" width="20" height="1.300" fill="#e8b040"/><rect x="11" y="377.800" width="1.800" height="1.500" fill="#4040e0"/></g><g transform="translate(0,0)"><path d="M10.500 391H14.500V404H10.500z" fill="#e8b040" stroke="#2a2a2a" stroke-width="1"/><path d="M14 403H27.500V407.500H14z" fill="#e8b040" stroke="#2a2a2a" stroke-width="1"/><path d="M26 391.300L28 393.500L11 409.500L7.800 409.800L7.800 407z" fill="#e8b040" stroke="#2a2a2a" stroke-width="1.100"/><path d="M9.500 408L26.500 392.500" stroke="#2a2a2a" stroke-width="0.800"/></g><g transform="translate(7,419)"><path d="M0.700 7L12 0.700H20.300V11.500L8.500 19.300H0.700z" fill="#1a1a1a"/><path d="M8.500 7.500L19.300 1.700V11L8.500 18z" fill="#e8a860"/><path d="M2 7.200L12.300 1.700H18L8 7.200z" fill="#f0c080"/><rect x="1.700" y="8.200" width="5.800" height="10" fill="#f0d4a0"/><path d="M2.500 9.500l4.200 3.500l-4.200 4M6.700 9.500l-4.200 3.500l4.200 4" stroke="#1a1a1a" stroke-width="0.800" fill="none"/></g><g transform="translate(7,449.5)"><path d="M0.500 6C7 -1.500 14 -1.500 20.500 6V12.500C14 6.500 7 6.500 0.500 12.500z" fill="#f3cc74" stroke="#3a3020" stroke-width="0.800"/></g><g transform="translate(7.5,473.5)"><rect x="0.500" y="0.500" width="3.500" height="20" fill="#e9b64c" stroke="#1a1a1a" stroke-width="0.800"/><rect x="8" y="0.500" width="3.500" height="20" fill="#e9b64c" stroke="#1a1a1a" stroke-width="0.800"/><rect x="15.500" y="0.500" width="3.500" height="20" fill="#e9b64c" stroke="#1a1a1a" stroke-width="0.800"/><rect x="4.300" y="7" width="3.400" height="5.500" fill="#20d8e0"/><rect x="11.800" y="7" width="3.400" height="5.500" fill="#20d8e0"/></g><g transform="translate(0,0)"><path d="M8.500 522.500L27 506" stroke="#111" stroke-width="1.400" stroke-dasharray="2.600 1.800"/></g><g transform="translate(7.5,532.5)"><path d="M6 5.500V2.300Q6 0.700 7.800 0.700H11Q12.800 0.700 12.800 2.300V5.500" fill="#f3d48c" stroke="#1a1a1a" stroke-width="1.300"/><path d="M0.500 8.500L4 4.500H16.500L20 7V17.500L16.500 20.500H0.500z" fill="#1a1a1a"/><rect x="1.500" y="9" width="14" height="10.500" fill="#f1cf7f"/><path d="M2.300 8L4.800 5.500H16L14.800 8z" fill="#f6dfa0"/><path d="M16.500 9L19 7.500V17L16.500 19.300z" fill="#c8a050"/><path d="M17.800 8.500v9.500" stroke="#f1cf7f" stroke-width="0.700"/></g><g transform="translate(7.5,584)"><path d="M3 2.500L18 17.500M18 2.500L3 17.500" stroke="#e82828" stroke-width="4.600" stroke-linecap="round"/></g><g transform="translate(7.5,612)"><path d="M1 6.500L7.500 0.500L12.500 4L8 6L5 9.500z" fill="#111"/><path d="M7 5L19 19" stroke="#c8b020" stroke-width="2"/><path d="M15.500 0.500V9" stroke="#111" stroke-width="1.300"/><rect x="13.500" y="8.500" width="4" height="10.500" fill="#e81010"/><path d="M2.500 11.500a3 3 0 1 0 4 -1l6 6.500l-2 2l-6 -6.500" fill="#d8d8d8" stroke="#111" stroke-width="1"/></g><g transform="translate(6.5,639.5)"><text x="4" y="10.500" font-size="11" font-family="Liberation Sans" fill="#000">1.0</text><path d="M0.500 14H21.500M3 10V18M19 10V18" stroke="#000" stroke-width="1.200"/><path d="M3 14l4 -2.300v4.600zM19 14l-4 -2.300v4.600z" fill="#000"/></g><g transform="translate(7,669)"><rect x="0" y="0" width="21.500" height="13.300" fill="#ffff00"/><path d="M0 0.500H21.500M0 12.800H21.500" stroke="#202000" stroke-width="1"/><path d="M2 0v3M5 0v2M8 0v3M11 0v2M14 0v3M17 0v2M20 0v3" stroke="#202000" stroke-width="0.800"/><text x="0.600" y="11.300" font-size="9.500" font-weight="bold" font-family="Liberation Sans" fill="#000" letter-spacing="1.800">123</text></g><g transform="translate(0,0)"><path d="M7.500 699L16.500 693.700H27.500L17.500 699z" fill="#d4d4d4" stroke="#222" stroke-width="0.800"/><path d="M17.500 699L27.500 693.700V696.500L17.500 701.800z" fill="#aaa" stroke="#222" stroke-width="0.700"/><path d="M14.200 702L24 696.800V704.500L14.200 709.500z" fill="#8a8a8a"/><path d="M14.200 703.500l9.800 -5.200M14.200 705.500l9.800 -5.200M14.200 707.500l9.800 -5.200M14.200 709.500l9.800 -5.200" stroke="#2a2a2a" stroke-width="0.700"/><path d="M17.500 709.500L27 704.300V707.300L17.500 712.500z" fill="#9a9a9a" stroke="#222" stroke-width="0.700"/><path d="M7.500 699H17.500V701.800H14.200V709.500H17.500V712.500H7.500V709.500H11V701.800H7.500z" fill="#e2e2e2" stroke="#111" stroke-width="1.100"/></g><g transform="translate(1893,68)"><path d="M0.500 9.500L10 0.500L20 6.500L13 12.500z" fill="#b8b8c0"/><path d="M10 0.500L20 6.500L16 11L7.500 5z" fill="#2828c0"/><path d="M11 2.500l6.500 4M9.500 4l7 4.500" stroke="#30c030" stroke-width="1.300"/><path d="M0.500 10L10 0.700M7 4.500L16 11.500" stroke="#ff2020" stroke-width="1.400"/><path d="M3 12H13.500V20.500H3z" fill="#2020b0"/><path d="M13.500 12L19.500 8V16L13.500 20.500z" fill="#101070"/><path d="M4.500 14.500h7.500v3.500H4.500z" fill="#d8d8e8"/><path d="M6.500 14.500v3.500M8.500 14.500v3.500M10.500 14.500v3.500" stroke="#2020b0" stroke-width="0.800"/><rect x="15.500" y="12" width="2" height="3" fill="#e8e8f8"/></g><g transform="translate(1892,146)"><path d="M2.200 5V25M21 5V25" stroke="#333" stroke-width="1.500"/><text x="4" y="20" font-size="15" font-weight="bold" font-family="Liberation Sans" fill="#1010ff" textLength="15.500" lengthAdjust="spacingAndGlyphs">3D</text></g><g transform="translate(1893,179)"><path d="M0.500 0.500H20.500V9H12V19.500H0.500z" fill="#700000" stroke="#000" stroke-width="1"/><path d="M3 3.500H17L12 8.500H8V14L3 18z" fill="#e81010"/><path d="M0 8H21" stroke="#fff" stroke-width="1.800"/><path d="M5 8H17" stroke="#e81010" stroke-width="1" stroke-dasharray="2 1.500"/><path d="M0 14.300H21.500" stroke="#1010ff" stroke-width="1.400"/></g><g transform="translate(1893,207)"><path d="M2 2H18.500L20.500 5V10.500H0.500V5z" fill="#800000"/><path d="M2.500 10.500H18.500V18.500H2.500z" fill="#d4d4d4"/><path d="M2.500 10.500V18.500H18.500V10.500" fill="none" stroke="#000" stroke-width="1.300"/><rect x="6.300" y="0.500" width="1.800" height="5" fill="#000"/><rect x="5.300" y="2" width="3.800" height="4.300" fill="none" stroke="#c8cad2" stroke-width="0"/><rect x="3.500" y="12.500" width="3" height="3.500" fill="#1010ff"/><rect x="14" y="12.500" width="3" height="3.500" fill="#3030e0"/><path d="M19 14.500H10M14 10.800L9.500 14.500L14 18.200" fill="none" stroke="#ff1010" stroke-width="1.600"/></g><g transform="translate(1893,234.5)"><path d="M2 2H18.500L20.500 5V10.500H0.500V5z" fill="#800000"/><path d="M2.500 10.500H18.500V18.500H2.500z" fill="#d4d4d4"/><path d="M2.500 10.500V18.500H18.500V10.500" fill="none" stroke="#000" stroke-width="1.300"/><rect x="13.500" y="1" width="2" height="1.300" fill="#000"/><path d="M3.500 14.500H15M11 10.800L15.500 14.500L11 18.200" fill="none" stroke="#ff1010" stroke-width="1.600"/><rect x="15" y="13.300" width="2" height="2.400" fill="#5050d8"/></g><g transform="translate(1893,263)"><rect x="15" y="3.500" width="2.300" height="2.300" fill="#111"/><path d="M3.500 11.500H18V17.500H3.500z" fill="#d4d4d4"/><path d="M3.500 11V17.600H18.500V11" fill="none" stroke="#000" stroke-width="1.200"/><path d="M1.500 12L11 2.500L20.500 12" fill="none" stroke="#9c0808" stroke-width="1.900"/><path d="M11 17V6M7.500 10L11 5.500L14.500 10" fill="none" stroke="#ff1010" stroke-width="1.600"/><rect x="6" y="12" width="4" height="2" fill="#4040e0"/><rect x="13" y="11" width="3.500" height="6" fill="#a00808"/></g><g transform="translate(0,0)"><rect x="1897.300" y="292.300" width="1.800" height="2" fill="#111"/><path d="M1895.500 300.500H1910.500V308H1895.500z" fill="#d0d0d0"/><path d="M1895.500 300V308.200H1910.800V300" fill="none" stroke="#000" stroke-width="1.300"/><path d="M1893.500 302L1902.700 292.300L1912 302" fill="none" stroke="#9c0808" stroke-width="1.900"/><path d="M1902.700 294.500V305.500M1899 301.500L1902.700 305.800L1906.400 301.500" fill="none" stroke="#ff1010" stroke-width="1.600"/><rect x="1898" y="302.500" width="2" height="1.500" fill="#3030e0"/><rect x="1905.500" y="302.500" width="2" height="1.500" fill="#3030e0"/></g><g transform="translate(0,0)"><rect x="1894.800" y="317.800" width="18.600" height="17" fill="#fff"/><path d="M1895 329.500H1903.500V336H1895.500V329.500M1903.500 329.500L1912.500 322.500V328.800L1903.500 336M1894.300 329.500L1899.500 324L1908 316.700L1913.500 321.800L1903.800 329.500M1899.500 324L1903.800 329.500" fill="none" stroke="#a45a38" stroke-width="1.100"/><path d="M1900 324L1908 317.500L1912.300 321.700L1904 328.500z" fill="#ececec"/><rect x="1896.200" y="330.500" width="6.500" height="4.800" fill="#ececec"/></g><g transform="translate(0,0)"><rect x="1894.300" y="344.800" width="18.600" height="18.600" fill="#fff" stroke="#111" stroke-width="1.600"/><rect x="1894" y="344" width="19.200" height="2.800" fill="#111"/><path d="M1896 345.600h2M1909 345.600h2" stroke="#e8e8e8" stroke-width="0.800"/><rect x="1898.500" y="349" width="10.500" height="12" fill="#0a0a0a"/><path d="M1900.500 359.500V353Q1900.500 351.200 1902.500 351.200H1907" fill="none" stroke="#d01010" stroke-width="2" stroke-dasharray="1.500 0.600"/></g><g transform="translate(0,0)"><path d="M1896 372.500L1908.500 374.500L1910.800 377L1907.500 383.500L1899 383.500z" fill="#8a8a8a"/><circle cx="1896" cy="372.800" r="1.300" fill="#ff1010"/><circle cx="1911" cy="376.300" r="1.300" fill="#ff1010"/><path d="M1893.500 382H1913.500" stroke="#000" stroke-width="1.200"/><path d="M1894 379.500l4 5M1898 379.500l-4 5M1896 379v6M1909 379.500l4 5M1913 379.500l-4 5M1911 379v6" stroke="#000" stroke-width="1"/><path d="M1901.300 378V386.500Q1903.700 389.500 1906 386.500V378" fill="none" stroke="#ff1010" stroke-width="1.500"/></g><g transform="translate(1893,399)"><rect x="0" y="0" width="21" height="20" fill="#fff"/><path d="M2.500 15.500L10.500 4.500L18.500 15.500" fill="none" stroke="#1a1a1a" stroke-width="4.200" stroke-linejoin="round" stroke-linecap="round"/><path d="M2.800 14.800L10.500 5L18.200 14.800" fill="none" stroke="#f0c860" stroke-width="2" stroke-linejoin="round"/><circle cx="10.500" cy="9.500" r="1.700" fill="#111"/><circle cx="3" cy="16" r="2" fill="#111"/><circle cx="18" cy="16" r="2" fill="#111"/></g><g transform="translate(1893,426.5)"><rect x="0.800" y="0.800" width="19.500" height="18" fill="#fff" stroke="#222" stroke-width="1.500"/><path d="M3.500 6.500H15L17.500 14.500H6z" fill="#e8c478" stroke="#e0a050" stroke-width="1"/></g><g transform="translate(0,0)"><path d="M1895 465L1906 454.500H1912.500V463L1902 473.700H1895z" fill="#141414"/><path d="M1896.200 466H1901V472.500H1896.200z" fill="#f0c878"/><path d="M1896.500 464.800L1906.300 455.700H1911L1901.300 464.800z" fill="#f5d690"/><path d="M1902.200 465.500L1911.500 456.500V462.500L1902.200 472z" fill="#e0a850"/></g><g transform="translate(0,0)"><path d="M1895 483L1913 501" stroke="#000" stroke-width="1.500"/><path d="M1894 482H1900V488z" fill="#000"/><path d="M1907 495.500H1913.500V502z" fill="#000"/></g><g transform="translate(1892.5,510)"><path d="M1.500 6L5 4L9 3.500L12 2L16 1.500L19 0.500L20 1.500V8.500H1z" fill="#05050f"/><path d="M3 6L7 4.500L11 4L14.500 2.700L18.500 1.500" stroke="#2020a0" stroke-width="1.200" stroke-dasharray="2 1.300" fill="none"/><path d="M4.500 8L8 6.500L11 6L14 5.300L17 4.500L19.500 4V14.500H4.500z" fill="#33e0e6"/><path d="M1 14.800H20.500V16L16 16.600H12L8 17.800L5 18.800L1.500 18.300z" fill="#05050f"/><path d="M4.800 15H11.500L11 16.300L7.500 17L5.300 17.800z" fill="#33e0e6"/><rect x="0.500" y="9.300" width="20.500" height="2.500" fill="#fbfbfb"/><rect x="0.800" y="13.300" width="20" height="1.600" fill="#0000f0"/></g><g transform="translate(0,0)"><path d="M1895 538H1904.500L1910.500 549.500H1895z" fill="#d8b49c" opacity="0.750"/><path d="M1893 549.700H1913.500" stroke="#fff" stroke-width="2"/><path d="M1893 549.700l2.500 -2v4zM1913.500 549.700l-2.500 -2v4z" fill="#fff"/><rect x="1896.500" y="551" width="14" height="2.500" fill="#e6d668"/><path d="M1901.500 537V556" stroke="#1010ff" stroke-width="1.500"/><path d="M1898.800 539.500L1901.500 535.700L1904.200 539.500zM1898.800 553.500L1901.500 557L1904.200 553.500z" fill="#1010ff"/></g><g transform="translate(0,0)"><path d="M1898 565.500H1911V582.500H1896V567.500z" fill="#f6b8b0" stroke="#ff2020" stroke-width="1.600"/><path d="M1899.500 567v14M1902 567v14M1905 567v14M1907.500 567v14" stroke="#ff2020" stroke-width="1.300"/><path d="M1900.700 567v14M1906.200 567v14" stroke="#e0c060" stroke-width="1.300"/><path d="M1893 575H1914" stroke="#fff" stroke-width="2.200"/><path d="M1896 575h15" stroke="#ffb0b0" stroke-width="0.800" stroke-dasharray="1.200 1.500"/><path d="M1893 578.700H1914" stroke="#1010c0" stroke-width="1.300"/></g><g transform="translate(0,0)"><path d="M1895.500 601.500H1912.500V609.500H1895.500z" fill="#888"/><path d="M1895 604V610H1913V604" fill="none" stroke="#111" stroke-width="1.300"/><path d="M1894 603.500L1903.500 594.500L1913 603" fill="none" stroke="#111" stroke-width="1.300"/><path d="M1894 602.500L1903 594" stroke="#ff1010" stroke-width="1.600"/><path d="M1903 595L1909 591L1913.500 594.500V599L1909.500 601.500z" fill="#ff1010"/><path d="M1894 594.500H1913.500M1894 592.500V596.500M1913.500 592.500V596.500" stroke="#1010ff" stroke-width="1.300"/><rect x="1897.500" y="604" width="3.200" height="5.500" fill="#1010ff"/><rect x="1902.500" y="604" width="3.200" height="5.500" fill="#1010ff"/><path d="M1893.500 611H1914" stroke="#f4f4f4" stroke-width="1.500"/><path d="M1893.500 609V613M1914 609V613" stroke="#f4f4f4" stroke-width="1"/></g><g transform="translate(0,0)"><rect x="1895.500" y="621.500" width="11.500" height="11.500" fill="none" stroke="#10108c" stroke-width="1.400"/><rect x="1899.500" y="627.500" width="12.500" height="10" fill="none" stroke="#10108c" stroke-width="1.400"/><path d="M1899.600 622.500V635L1902.500 632.500L1905 638L1907 637L1904.700 631.800H1908.500z" fill="#fff" stroke="#111" stroke-width="1"/></g><g transform="translate(0,0)"><path d="M1894.500 653L1898.500 651.500L1900 653.500H1905V659H1894.500z" fill="#ffff50" stroke="#111" stroke-width="0.900"/><path d="M1894.500 653V664.500L1899 658.500H1905" fill="#ffff50"/><path d="M1894.300 664.800L1898.500 658.800H1913.500L1908.500 664.800z" fill="#8a8a10" stroke="#111" stroke-width="0.900"/><path d="M1894.500 653V664.500" stroke="#111" stroke-width="1"/><path d="M1905.500 651C1907 648 1910.500 648 1912 651M1912.500 648V651.500H1909" fill="none" stroke="#111" stroke-width="1.100"/></g><g transform="translate(0,0)"><path d="M1905.500 678L1909 676.500L1912.500 675L1913.500 676.500V680H1905.500z" fill="#05050f"/><path d="M1905.300 678H1909V692H1905.300z" fill="#0a0a50"/><path d="M1905.300 680.500h3.500M1905.300 684.500h3.500M1905.300 688.500h3.500" stroke="#05050f" stroke-width="1.500"/><path d="M1908.700 680L1913.500 678.500V689L1908.700 690.500z" fill="#33e0e6"/><path d="M1905.300 690.500L1913 688.500V690.500L1908 692.500H1905.300z" fill="#05050f"/><path d="M1893.500 677.300h3.600M1897.600 682.700h3.600M1897.600 687.300h3.600M1901.200 692h3.600" stroke="#5a78a8" stroke-width="2"/><path d="M1900.500 677h3.500M1904 693h4" stroke="#8aa0c8" stroke-width="0.800"/></g><g transform="translate(0,0)"><rect x="1893.500" y="704" width="20.300" height="15" fill="#1a1408"/><rect x="1893.500" y="705" width="20.300" height="2.200" fill="#c8982c"/><rect x="1893.500" y="715.800" width="20.300" height="2.200" fill="#c8982c"/><path d="M1895 708v7.200M1898.800 708v7.200M1902.700 708v7.200M1906.700 708v7.200M1910.300 708v7.200M1913.300 708v7.200" stroke="#f0b840" stroke-width="2.300"/></g><g transform="translate(1893,729)"><rect x="0" y="0" width="21" height="21" fill="#dadada" opacity="0.900"/><path d="M0 0L7 5M21 0L14 5M0 21L7 16M21 21L14 16" stroke="#c4c4c4" stroke-width="1.200"/><circle cx="10.500" cy="10.500" r="9" fill="none" stroke="#c4c4c4" stroke-width="1.200"/><text x="3.500" y="15" font-size="12" font-family="Liberation Sans" fill="#c0c0c0" stroke="#c0c0c0" stroke-width="0.300">2D</text></g><g transform="translate(1892.5,762)"><rect x="0" y="0" width="22" height="21" fill="#fff"/><path d="M18.500 1V20M1.500 20.500H20" stroke="#000" stroke-width="1.200"/><path d="M2.500 8.500H18" stroke="#1010ff" stroke-width="1.500" stroke-dasharray="4 1.500"/><path d="M2.500 11.500H18" stroke="#ff1010" stroke-width="1.500"/><path d="M2.500 14.500H18M2.500 17.500H18" stroke="#000" stroke-width="1.300"/></g><g transform="translate(1892.5,789)"><rect x="0" y="0" width="22" height="22" fill="#fff"/><rect x="2.300" y="2.300" width="17.500" height="16.500" fill="#fff" stroke="#000" stroke-width="1.500"/></g><g transform="translate(1892.5,816)"><rect x="0" y="0" width="22" height="22" fill="#fff"/><rect x="2.300" y="2.300" width="17.500" height="16.500" fill="#fff" stroke="#000" stroke-width="1.500"/><rect x="11" y="13" width="8" height="2.500" fill="#b00000"/><rect x="11" y="15.500" width="8" height="2.800" fill="#1010c0"/></g><g transform="translate(1892.5,843)"><rect x="0" y="0" width="22" height="22" fill="#fff"/><rect x="2.300" y="2.300" width="17.500" height="16.500" fill="#fff" stroke="#000" stroke-width="1.500"/><path d="M16 6L8 14M7.500 9V14.500H13" fill="none" stroke="#000" stroke-width="1.300"/></g><g transform="translate(1893,871)"><path d="M17 14.500A7.500 7.500 0 1 1 17.500 8" fill="none" stroke="#000" stroke-width="1.300"/><path d="M13.500 9.500H20.500L18 13.500z" fill="#000"/></g><g transform="translate(1892.5,907)"><rect x="1.300" y="5" width="9.500" height="9.500" fill="none" stroke="#1010ff" stroke-width="1.400"/><path d="M7.500 9.500H21" stroke="#222" stroke-width="1.500"/><rect x="4.500" y="8.200" width="3" height="2.600" fill="#ff1010"/></g><g transform="translate(1896,956)"><path d="M2 1.500H9.500" stroke="#111" stroke-width="1.200"/><path d="M1.300 5h4l-2 3.500zM6.300 5h4l-2 3.500z" fill="#111"/><path d="M3.500 8.800l1.300 -1.500M8.500 8.800l1.300 -1.500" stroke="#eee" stroke-width="1"/></g><g transform="translate(0,0)"><path d="M1108.8 939.5V949.2H1100.0V958.0H1090.0" fill="none" stroke="#8e8e8e" stroke-width="1"/><path d="M1089.5 958.5L1109.0 938.8" stroke="#8c961c" stroke-width="1.2"/><path d="M1089.0 945.0H1094.5M1089.0 948.5H1094.0M1089.0 950.5H1094.0M1090.0 939.2L1096.3 945.3M1097.5 939.5V944.2M1099.5 939.5V943.5M1090.0 956.5L1094.0 953.0" stroke="#8c961c" stroke-width="1.1" fill="none"/><path d="M1095.5 944.5H1103.8L1095.5 953.3z" fill="#ff0000"/><rect x="1099.0" y="942.5" width="4.2" height="1.8" fill="#901010"/><path d="M1100.0 939.3H1108.0" stroke="#d83838" stroke-width="1.2" stroke-dasharray="1.6 1.4"/></g><g transform="translate(1118,943)"><rect x="1" y="1.500" width="20" height="9.500" fill="#b0b0b0"/><path d="M1 1.500H13L7 11H1z" fill="#2020e0"/><rect x="1" y="1.500" width="20" height="9.500" fill="url(#dots2)"/><rect x="1" y="0.500" width="16" height="1.500" fill="#000"/><path d="M1 10.500h6l-1 2h-5z" fill="#000"/><rect x="6.500" y="11" width="14.500" height="1.500" fill="#9a9a9a"/></g><g transform="translate(1180.5,938)"><rect x="1.500" y="1" width="20" height="13.500" fill="#ffff00"/><path d="M1.500 14H21.500" stroke="#e01010" stroke-width="1.300"/><path d="M1.500 1.500H21.500" stroke="#e01010" stroke-width="1.300"/><path d="M4 1v3M7 1v2M10 1v3M13 1v2M16 1v3M19 1v2" stroke="#e01010" stroke-width="0.800"/><text x="2" y="12" font-size="9.500" font-weight="bold" font-family="Liberation Sans" fill="#e01010" letter-spacing="1.300">123</text><path d="M9 10a3 3 0 1 0 4 -1l7 7.500l-2 2l-7 -7.500" fill="#d8d8d8" stroke="#111" stroke-width="1"/></g></svg>
</body></html>
